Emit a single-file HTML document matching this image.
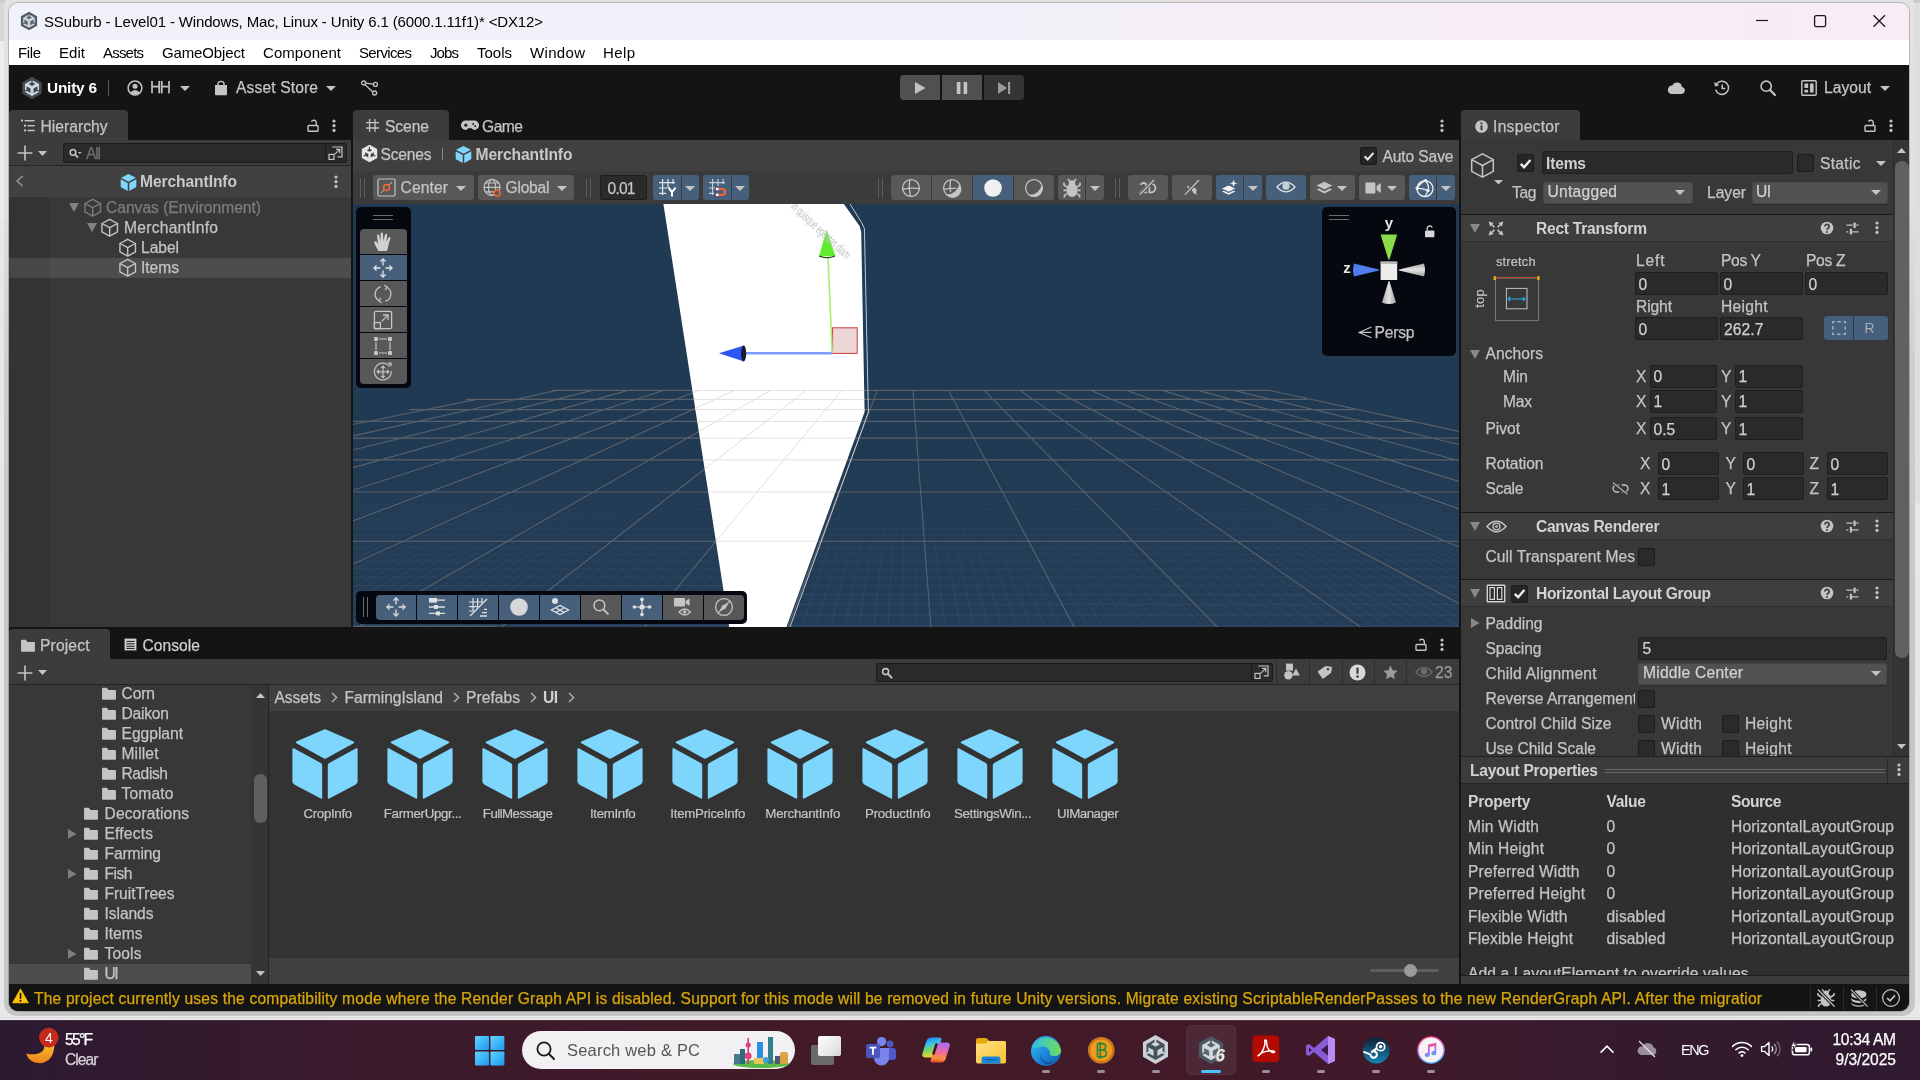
<!DOCTYPE html>
<html lang="en"><head><meta charset="utf-8"><title>Unity Editor</title>
<style>
html,body{margin:0;padding:0;}
body{width:1920px;height:1080px;overflow:hidden;position:relative;background:#ececec;font-family:"Liberation Sans",sans-serif;}
.a{position:absolute;display:block;}
.t{white-space:nowrap;}
#root{position:absolute;left:0;top:0;width:1920px;height:1080px;overflow:hidden;will-change:transform;}
svg{overflow:visible;}
</style></head>
<body>
<div id="root">
<div class="a" style="left:0px;top:0px;width:1920px;height:1020px;background:#e7e7e7;"></div>
<div class="a" style="left:0px;top:0px;width:1920px;height:3px;background:#cbcbcb;"></div>
<div class="a" style="left:0px;top:3px;width:5px;height:38px;background:#d7d7d7;"></div>
<div class="a" style="left:0px;top:41px;width:5px;height:180px;background:#ececec;"></div>
<div class="a" style="left:1915px;top:3px;width:5px;height:500px;background:#dedede;"></div>
<div class="a" style="left:4px;top:-6px;width:1911px;height:1022px;background:linear-gradient(180deg,#e3e3e3 0%,#e1e1e1 20%,#cdcdcd 38%,#c7c7c7 60%,#c6c6c6 100%);border-radius:13px;"></div>
<div class="a" style="left:0px;top:1017px;width:1920px;height:3px;background:linear-gradient(180deg,#dcdcdc,#efefef);"></div>
<div class="a" style="left:9px;top:3px;width:1900px;height:1008px;background:transparent;border-radius:9px;box-shadow:0 0 0 1px rgba(0,0,0,0.2);"></div>
<div class="a" style="left:9px;top:60px;width:1900px;height:951px;background:#141414;border-radius:0 0 9px 9px;"></div>
<div class="a" style="left:9px;top:3px;width:1900px;height:37px;background:linear-gradient(90deg,#f1f2f9 0%,#f1f1f9 45%,#f6eef7 70%,#f8ecf6 100%);border-radius:9px 9px 0 0;"></div>
<svg class="a" style="left:19px;top:11px;" width="20" height="20" viewBox="0 0 24 24"><path d="M12 0.8L21.7 6.4V17.6L12 23.2L2.3 17.6V6.4Z" fill="#4f5c67"/><path d="M12 3.9L19 7.95V16.05L12 20.1L5 16.05V7.95Z" fill="#cdd3d9"/><g fill="#5a6670"><path d="M12 5.9L15.4 7.9L12 9.9L8.6 7.9Z"/><path d="M11.3 3.6H12.7V6.6H11.3Z"/><path d="M6.5 10.3L10.5 12.6V17L6.5 14.7Z"/><path d="M17.5 10.3L13.5 12.6V17L17.5 14.7Z"/><path d="M4.2 14.9L6.9 13.4L7.6 14.6L4.9 16.1ZM19.8 14.9L17.1 13.4L16.4 14.6L19.1 16.1Z"/></g></svg>
<span class="a t" id="t1" style="top:11px;font-size:15px;line-height:21px;color:#000;letter-spacing:-0.141px;left:44px;">SSuburb - Level01 - Windows, Mac, Linux - Unity 6.1 (6000.1.11f1)* &lt;DX12&gt;</span>
<svg class="a" style="left:1750px;top:12px;" width="150" height="20" viewBox="0 0 150 20"><path d="M6 8.5H18" stroke="#1a1a1a" stroke-width="1.2"/><rect x="64.6" y="3.6" width="11" height="11" rx="1.6" fill="none" stroke="#1a1a1a" stroke-width="1.3"/><path d="M123.5 3.2L135 14.8M135 3.2L123.5 14.8" stroke="#1a1a1a" stroke-width="1.3"/></svg>
<div class="a" style="left:9px;top:40px;width:1900px;height:25px;background:#ffffff;"></div>
<span class="a t" id="t2" style="top:42px;font-size:15px;line-height:21px;color:#000;letter-spacing:-0.391px;left:18px;">File</span>
<span class="a t" id="t3" style="top:42px;font-size:15px;line-height:21px;color:#000;letter-spacing:0.047px;left:59px;">Edit</span>
<span class="a t" id="t4" style="top:42px;font-size:15px;line-height:21px;color:#000;letter-spacing:-0.803px;left:103px;">Assets</span>
<span class="a t" id="t5" style="top:42px;font-size:15px;line-height:21px;color:#000;letter-spacing:-0.134px;left:162px;">GameObject</span>
<span class="a t" id="t6" style="top:42px;font-size:15px;line-height:21px;color:#000;letter-spacing:0.055px;left:263px;">Component</span>
<span class="a t" id="t7" style="top:42px;font-size:15px;line-height:21px;color:#000;letter-spacing:-0.647px;left:359px;">Services</span>
<span class="a t" id="t8" style="top:42px;font-size:15px;line-height:21px;color:#000;letter-spacing:-0.896px;left:430px;">Jobs</span>
<span class="a t" id="t9" style="top:42px;font-size:15px;line-height:21px;color:#000;letter-spacing:-0.008px;left:477px;">Tools</span>
<span class="a t" id="t10" style="top:42px;font-size:15px;line-height:21px;color:#000;letter-spacing:0.328px;left:530px;">Window</span>
<span class="a t" id="t11" style="top:42px;font-size:15px;line-height:21px;color:#000;letter-spacing:0.380px;left:603px;">Help</span>
<div class="a" style="left:9px;top:65px;width:1900px;height:45px;background:#141414;"></div>
<svg class="a" style="left:19.5px;top:75.5px;" width="24" height="24" viewBox="0 0 24 24"><path d="M12 0.8L21.7 6.4V17.6L12 23.2L2.3 17.6V6.4Z" fill="#424d57"/><path d="M12 3.9L19 7.95V16.05L12 20.1L5 16.05V7.95Z" fill="#d2d7dc"/><g fill="#3f4a54"><path d="M12 5.9L15.4 7.9L12 9.9L8.6 7.9Z"/><path d="M11.3 3.6H12.7V6.6H11.3Z"/><path d="M6.5 10.3L10.5 12.6V17L6.5 14.7Z"/><path d="M17.5 10.3L13.5 12.6V17L17.5 14.7Z"/><path d="M4.2 14.9L6.9 13.4L7.6 14.6L4.9 16.1ZM19.8 14.9L17.1 13.4L16.4 14.6L19.1 16.1Z"/></g></svg>
<span class="a t" id="t12" style="top:77px;font-size:15.4px;line-height:21px;color:#ffffff;font-weight:700;letter-spacing:-0.219px;left:47px;">Unity 6</span>
<div class="a" style="left:108px;top:80px;width:1px;height:16px;background:#5a5a5a;"></div>
<svg class="a" style="left:127px;top:80px;" width="16" height="16" viewBox="0 0 16 16"><circle cx="8" cy="8" r="6.9" fill="none" stroke="#c4c4c4" stroke-width="1.5"/><circle cx="8" cy="6.3" r="2.5" fill="#c4c4c4"/><path d="M3.2 12.6Q8 7.6 12.8 12.6Q8 16 3.2 12.6Z" fill="#c4c4c4"/></svg>
<span class="a t" id="t13" style="top:77px;font-size:15.6px;line-height:21px;color:#c4c4c4;letter-spacing:-1.531px;-webkit-text-stroke:0.25px #c4c4c4;left:150px;">HH</span>
<svg class="a" style="left:180px;top:86px;" width="10" height="5" viewBox="0 0 10 5"><path d="M0 0H10L5.0 5Z" fill="#c4c4c4"/></svg>
<svg class="a" style="left:214px;top:80px;" width="14" height="16" viewBox="0 0 14 16"><path d="M1 5H13V14.2Q13 15.2 12 15.2H2Q1 15.2 1 14.2Z" fill="#c4c4c4"/><path d="M4 6V3.8Q4 1.4 7 1.4Q10 1.4 10 3.8V6" fill="none" stroke="#c4c4c4" stroke-width="1.4"/></svg>
<span class="a t" id="t14" style="top:77px;font-size:15.6px;line-height:21px;color:#c4c4c4;letter-spacing:0.139px;-webkit-text-stroke:0.25px #c4c4c4;left:236px;">Asset Store</span>
<svg class="a" style="left:326px;top:86px;" width="10" height="5" viewBox="0 0 10 5"><path d="M0 0H10L5.0 5Z" fill="#c4c4c4"/></svg>
<svg class="a" style="left:360px;top:79px;" width="19" height="18" viewBox="0 0 19 18"><g fill="none" stroke="#c4c4c4" stroke-width="1.3"><circle cx="3.6" cy="4" r="2"/><circle cx="15.4" cy="5.4" r="2"/><circle cx="14.6" cy="14" r="2"/><path d="M5.6 4.2L13.4 5.2M5 5.6L12.8 13"/></g></svg>
<div class="a" style="left:900px;top:75px;width:40px;height:25px;background:#505050;border-radius:4px 0 0 4px;"></div>
<div class="a" style="left:942px;top:75px;width:40px;height:25px;background:#505050;"></div>
<div class="a" style="left:984px;top:75px;width:40px;height:25px;background:#353535;border-radius:0 4px 4px 0;"></div>
<svg class="a" style="left:900px;top:75px;" width="124" height="25" viewBox="0 0 124 25"><path d="M15 7L25.5 13L15 19Z" fill="#c4c4c4"/><path d="M56.8 7H60.4V19H56.8ZM63.6 7H67.2V19H63.6Z" fill="#c4c4c4"/><path d="M98 7L107 13L98 19Z" fill="#9a9a9a"/><path d="M108 7H110.2V19H108Z" fill="#9a9a9a"/></svg>
<svg class="a" style="left:1666px;top:80px;" width="20" height="15" viewBox="0 0 20 15"><path d="M5 14H15.6A3.6 3.6 0 0 0 16 6.9A5.2 5.2 0 0 0 6.2 5.4A4.4 4.4 0 0 0 5 14Z" fill="#c4c4c4"/></svg>
<svg class="a" style="left:1713px;top:79px;" width="18" height="18" viewBox="0 0 18 18"><g fill="none" stroke="#c4c4c4" stroke-width="1.5"><path d="M3.4 5.2A6.6 6.6 0 1 1 2.6 10.6"/><path d="M9.2 5.4V9.6H12.4"/></g><path d="M1 3L2 7.6L6.4 6.2Z" fill="#c4c4c4"/></svg>
<svg class="a" style="left:1759px;top:79px;" width="18" height="18" viewBox="0 0 18 18"><circle cx="7.2" cy="7.2" r="5.1" fill="none" stroke="#c4c4c4" stroke-width="1.6"/><path d="M11 11L16 16" stroke="#c4c4c4" stroke-width="2.2" stroke-linecap="round"/></svg>
<svg class="a" style="left:1801px;top:80px;" width="16" height="16" viewBox="0 0 16 16"><rect x="0.8" y="0.8" width="14.4" height="14.4" rx="1" fill="none" stroke="#c4c4c4" stroke-width="1.4"/><path d="M3.4 3.4H7.2V8H3.4ZM9 3.4H12.6V12.6H9ZM3.4 9.8H7.2V12.6H3.4Z" fill="#c4c4c4"/></svg>
<span class="a t" id="t15" style="top:77px;font-size:15.6px;line-height:21px;color:#c4c4c4;letter-spacing:0.034px;-webkit-text-stroke:0.25px #c4c4c4;left:1824px;">Layout</span>
<svg class="a" style="left:1880px;top:86px;" width="10" height="5" viewBox="0 0 10 5"><path d="M0 0H10L5.0 5Z" fill="#c4c4c4"/></svg>
<div class="a" style="left:9px;top:110px;width:119px;height:30px;background:#3c3c3c;border-radius:4px 4px 0 0;"></div>
<svg class="a" style="left:21px;top:119px;" width="14" height="13" viewBox="0 0 14 13"><g fill="#c4c4c4"><rect x="0" y="0.6" width="2" height="2"/><rect x="3.6" y="1" width="10" height="1.4"/><rect x="3" y="5.6" width="2" height="2"/><rect x="6.4" y="6" width="7.4" height="1.4"/><rect x="3" y="10.4" width="2" height="2"/><rect x="6.4" y="10.8" width="7.4" height="1.4"/></g></svg>
<span class="a t" id="t16" style="top:116px;font-size:15.6px;line-height:21px;color:#c4c4c4;letter-spacing:0.033px;-webkit-text-stroke:0.25px #c4c4c4;left:40.5px;">Hierarchy</span>
<svg class="a" style="left:307px;top:118.5px;" width="12" height="13" viewBox="0 0 12 13"><rect x="1" y="6.5" width="10" height="5.8" rx="0.8" fill="none" stroke="#c4c4c4" stroke-width="1.4"/><path d="M9.3 6.5V3.6A2.6 2.6 0 0 0 4.4 2.6" fill="none" stroke="#c4c4c4" stroke-width="1.4"/></svg>
<svg class="a" style="left:331px;top:117.8px;" width="6" height="15.4" viewBox="0 0 6 15.4"><circle cx="3" cy="3.0" r="1.6" fill="#c4c4c4"/><circle cx="3" cy="7.7" r="1.6" fill="#c4c4c4"/><circle cx="3" cy="12.4" r="1.6" fill="#c4c4c4"/></svg>
<div class="a" style="left:9px;top:140px;width:342px;height:26px;background:#3c3c3c;"></div>
<div class="a" style="left:9px;top:165px;width:342px;height:1px;background:#242424;"></div>
<svg class="a" style="left:17px;top:145px;" width="16" height="16" viewBox="0 0 16 16"><path d="M8 0.6V15.4M0.6 8H15.4" stroke="#c4c4c4" stroke-width="1.6"/></svg>
<svg class="a" style="left:38px;top:150.5px;" width="9" height="5" viewBox="0 0 9 5"><path d="M0 0H9L4.5 5Z" fill="#c4c4c4"/></svg>
<div class="a" style="left:63px;top:143px;width:284px;height:20px;background:#2a2a2a;border-radius:3px;box-shadow:inset 0 0 0 1px #1c1c1c;"></div>
<svg class="a" style="left:69px;top:148px;" width="13" height="11" viewBox="0 0 13 11"><circle cx="4" cy="4.4" r="2.8" fill="none" stroke="#c4c4c4" stroke-width="1.5"/><path d="M6 6.4L9 9.6" stroke="#c4c4c4" stroke-width="1.6"/><path d="M9 4H12.6L10.8 6Z" fill="#c4c4c4"/></svg>
<span class="a t" id="t17" style="top:143px;font-size:15.6px;line-height:21px;color:#6e6e6e;letter-spacing:-1.172px;-webkit-text-stroke:0.25px #6e6e6e;left:86px;">All</span>
<div class="a" style="left:325px;top:144px;width:1px;height:18px;background:#1c1c1c;"></div>
<svg class="a" style="left:328px;top:146px;" width="16" height="15" viewBox="0 0 16 15"><g fill="none" stroke="#c4c4c4" stroke-width="1.2"><path d="M4.4 1H14V10.8H9.6"/><rect x="1" y="8.4" width="5" height="5" /><path d="M6.6 8.4L11.6 3.6M8 3.4H11.8V7.2"/></g></svg>
<div class="a" style="left:9px;top:166px;width:342px;height:31px;background:#414141;"></div>
<svg class="a" style="left:15px;top:175px;" width="9" height="12" viewBox="0 0 9 12"><path d="M7.6 1L2 6L7.6 11" fill="none" stroke="#9a9a9a" stroke-width="1.4"/></svg>
<svg class="a" style="left:119px;top:172.5px;" width="19" height="19" viewBox="0 0 18 18"><path d="M9 1L16 4.6L9 8.2L2 4.6Z" fill="#7fd6fd"/><path d="M1.6 5.9L8.3 9.4V17L2.3 13.8Q1.6 13.4 1.6 12.6Z" fill="#7fd6fd"/><path d="M16.4 5.9L9.7 9.4V17L15.7 13.8Q16.4 13.4 16.4 12.6Z" fill="#7fd6fd"/></svg>
<span class="a t" id="t18" style="top:171px;font-size:15.6px;line-height:21px;color:#c8c8c8;font-weight:700;letter-spacing:-0.082px;left:140px;">MerchantInfo</span>
<svg class="a" style="left:333px;top:174.3px;" width="6" height="15.4" viewBox="0 0 6 15.4"><circle cx="3" cy="3.0" r="1.6" fill="#c4c4c4"/><circle cx="3" cy="7.7" r="1.6" fill="#c4c4c4"/><circle cx="3" cy="12.4" r="1.6" fill="#c4c4c4"/></svg>
<div class="a" style="left:9px;top:197px;width:342px;height:430px;background:#383838;"></div>
<div class="a" style="left:9px;top:197px;width:40px;height:430px;background:#333333;"></div>
<div class="a" style="left:9px;top:258px;width:342px;height:20px;background:#4d4d4d;"></div>
<div class="a" style="left:9px;top:258px;width:40px;height:20px;background:#474747;"></div>
<svg class="a" style="left:69px;top:202.5px;" width="10" height="9" viewBox="0 0 10 9"><path d="M0 0H10L5.0 9Z" fill="#828282"/></svg>
<svg class="a" style="left:83.4px;top:197.9px;" width="19.4" height="19.4" viewBox="0 0 18 18"><g fill="none" stroke="#7d7d7d" stroke-width="1.3" stroke-linejoin="round"><path d="M9 1.2L16.2 5.1V12.9L9 16.8L1.8 12.9V5.1Z"/><path d="M1.8 5.1L9 9L16.2 5.1M9 9V16.8"/></g></svg>
<span class="a t" id="t19" style="top:197px;font-size:15.6px;line-height:21px;color:#7d7d7d;letter-spacing:-0.007px;-webkit-text-stroke:0.25px #7d7d7d;left:106px;">Canvas (Environment)</span>
<svg class="a" style="left:87px;top:222.5px;" width="10" height="9" viewBox="0 0 10 9"><path d="M0 0H10L5.0 9Z" fill="#828282"/></svg>
<svg class="a" style="left:100.4px;top:217.9px;" width="19.4" height="19.4" viewBox="0 0 18 18"><g fill="none" stroke="#c4c4c4" stroke-width="1.3" stroke-linejoin="round"><path d="M9 1.2L16.2 5.1V12.9L9 16.8L1.8 12.9V5.1Z"/><path d="M1.8 5.1L9 9L16.2 5.1M9 9V16.8"/></g></svg>
<span class="a t" id="t20" style="top:217px;font-size:15.6px;line-height:21px;color:#c4c4c4;letter-spacing:0.271px;-webkit-text-stroke:0.25px #c4c4c4;left:124px;">MerchantInfo</span>
<svg class="a" style="left:118.4px;top:237.9px;" width="19.4" height="19.4" viewBox="0 0 18 18"><g fill="none" stroke="#c4c4c4" stroke-width="1.3" stroke-linejoin="round"><path d="M9 1.2L16.2 5.1V12.9L9 16.8L1.8 12.9V5.1Z"/><path d="M1.8 5.1L9 9L16.2 5.1M9 9V16.8"/></g></svg>
<span class="a t" id="t21" style="top:237px;font-size:15.6px;line-height:21px;color:#c4c4c4;letter-spacing:-0.039px;-webkit-text-stroke:0.25px #c4c4c4;left:141px;">Label</span>
<svg class="a" style="left:118.4px;top:257.9px;" width="19.4" height="19.4" viewBox="0 0 18 18"><g fill="none" stroke="#c4c4c4" stroke-width="1.3" stroke-linejoin="round"><path d="M9 1.2L16.2 5.1V12.9L9 16.8L1.8 12.9V5.1Z"/><path d="M1.8 5.1L9 9L16.2 5.1M9 9V16.8"/></g></svg>
<span class="a t" id="t22" style="top:257px;font-size:15.6px;line-height:21px;color:#c4c4c4;letter-spacing:-0.031px;-webkit-text-stroke:0.25px #c4c4c4;left:141px;">Items</span>
<div class="a" style="left:353px;top:110px;width:96px;height:30px;background:#3c3c3c;border-radius:4px 4px 0 0;"></div>
<svg class="a" style="left:366px;top:119px;" width="13" height="13" viewBox="0 0 13 13"><path d="M3.6 0V13M9 0V13M0 3.6H13M0 9H13" stroke="#c4c4c4" stroke-width="1.3"/></svg>
<span class="a t" id="t23" style="top:116px;font-size:15.6px;line-height:21px;color:#c4c4c4;letter-spacing:-0.055px;-webkit-text-stroke:0.25px #c4c4c4;left:385px;">Scene</span>
<svg class="a" style="left:461px;top:120px;" width="18" height="11" viewBox="0 0 18 11"><path d="M4.6 0.6H13.4A4.6 4.6 0 0 1 13.4 10Q12 10 10.6 8.2H7.4Q6 10 4.6 10A4.6 4.6 0 0 1 4.6 0.6Z" fill="#c4c4c4"/><path d="M3 5.2H6.6M4.8 3.4V7" stroke="#141414" stroke-width="1.2"/><circle cx="12.2" cy="4" r="0.9" fill="#141414"/><circle cx="14.2" cy="6.2" r="0.9" fill="#141414"/></svg>
<span class="a t" id="t24" style="top:116px;font-size:15.6px;line-height:21px;color:#c4c4c4;letter-spacing:-0.490px;-webkit-text-stroke:0.25px #c4c4c4;left:482px;">Game</span>
<svg class="a" style="left:1439px;top:117.8px;" width="6" height="15.4" viewBox="0 0 6 15.4"><circle cx="3" cy="3.0" r="1.6" fill="#c4c4c4"/><circle cx="3" cy="7.7" r="1.6" fill="#c4c4c4"/><circle cx="3" cy="12.4" r="1.6" fill="#c4c4c4"/></svg>
<div class="a" style="left:353px;top:140px;width:1106px;height:31px;background:#404040;"></div>
<svg class="a" style="left:360px;top:144px;" width="19" height="19" viewBox="0 0 24 24"><path d="M12 0.8L21.7 6.4V17.6L12 23.2L2.3 17.6V6.4Z" fill="#e6e6e6"/><path d="M12 3.9L19 7.95V16.05L12 20.1L5 16.05V7.95Z" fill="#e6e6e6"/><g fill="#404040"><path d="M12 5.9L15.4 7.9L12 9.9L8.6 7.9Z"/><path d="M11.3 3.6H12.7V6.6H11.3Z"/><path d="M6.5 10.3L10.5 12.6V17L6.5 14.7Z"/><path d="M17.5 10.3L13.5 12.6V17L17.5 14.7Z"/><path d="M4.2 14.9L6.9 13.4L7.6 14.6L4.9 16.1ZM19.8 14.9L17.1 13.4L16.4 14.6L19.1 16.1Z"/></g></svg>
<span class="a t" id="t25" style="top:144px;font-size:15.6px;line-height:21px;color:#c4c4c4;letter-spacing:-0.203px;-webkit-text-stroke:0.25px #c4c4c4;left:380.5px;">Scenes</span>
<div class="a" style="left:442px;top:148px;width:1px;height:12px;background:#8a8a8a;"></div>
<svg class="a" style="left:454px;top:144.5px;" width="19" height="19" viewBox="0 0 18 18"><path d="M9 1L16 4.6L9 8.2L2 4.6Z" fill="#7fd6fd"/><path d="M1.6 5.9L8.3 9.4V17L2.3 13.8Q1.6 13.4 1.6 12.6Z" fill="#7fd6fd"/><path d="M16.4 5.9L9.7 9.4V17L15.7 13.8Q16.4 13.4 16.4 12.6Z" fill="#7fd6fd"/></svg>
<span class="a t" id="t26" style="top:144px;font-size:15.6px;line-height:21px;color:#c8c8c8;font-weight:700;letter-spacing:-0.082px;left:475.5px;">MerchantInfo</span>
<div class="a" style="left:1360px;top:147px;width:17px;height:18px;background:#262626;border-radius:3px;box-shadow:inset 0 0 0 1px #1a1a1a;"></div>
<svg class="a" style="left:1362.5px;top:150px;" width="12" height="12" viewBox="0 0 11 11"><path d="M1.5 5.8L4.3 8.6L9.6 2.6" fill="none" stroke="#e8e8e8" stroke-width="1.9"/></svg>
<span class="a t" id="t27" style="top:146px;font-size:15.6px;line-height:21px;color:#c4c4c4;letter-spacing:-0.121px;-webkit-text-stroke:0.25px #c4c4c4;left:1382.5px;">Auto Save</span>
<div class="a" style="left:353px;top:171px;width:1106px;height:33px;background:#3b3b3b;"></div>
<div class="a" style="left:360px;top:178px;width:1px;height:20px;background:#5c5c5c;"></div>
<div class="a" style="left:364px;top:178px;width:1px;height:20px;background:#5c5c5c;"></div>
<div class="a" style="left:586px;top:178px;width:1px;height:20px;background:#5c5c5c;"></div>
<div class="a" style="left:590px;top:178px;width:1px;height:20px;background:#5c5c5c;"></div>
<div class="a" style="left:878px;top:178px;width:1px;height:20px;background:#5c5c5c;"></div>
<div class="a" style="left:882px;top:178px;width:1px;height:20px;background:#5c5c5c;"></div>
<div class="a" style="left:1115px;top:178px;width:1px;height:20px;background:#5c5c5c;"></div>
<div class="a" style="left:1119px;top:178px;width:1px;height:20px;background:#5c5c5c;"></div>
<div class="a" style="left:373px;top:175px;width:101px;height:25px;background:#585858;border-radius:3px;"></div>
<svg class="a" style="left:377px;top:178px;" width="19" height="19" viewBox="0 0 19 19"><rect x="1" y="1" width="17" height="17" rx="1.4" fill="none" stroke="#c4c4c4" stroke-width="1.2"/><path d="M4 15L15 4" stroke="#c4c4c4" stroke-width="1"/><circle cx="9.6" cy="9.6" r="3" fill="#585858" stroke="#f0643c" stroke-width="1.6"/></svg>
<span class="a t" id="t28" style="top:177px;font-size:15.6px;line-height:21px;color:#c4c4c4;letter-spacing:0.138px;-webkit-text-stroke:0.25px #c4c4c4;left:400.5px;">Center</span>
<svg class="a" style="left:456px;top:185.5px;" width="10" height="5" viewBox="0 0 10 5"><path d="M0 0H10L5.0 5Z" fill="#c4c4c4"/></svg>
<div class="a" style="left:478px;top:175px;width:96px;height:25px;background:#585858;border-radius:3px;"></div>
<svg class="a" style="left:483px;top:178px;" width="20" height="20" viewBox="0 0 20 20"><g fill="none" stroke="#c4c4c4" stroke-width="1.2"><circle cx="9" cy="9.4" r="8"/><ellipse cx="9" cy="9.4" rx="3.6" ry="8"/><path d="M1 9.4H17M2.4 5H15.6M2.4 13.8H15.6"/></g><circle cx="14" cy="15" r="3" fill="#585858" stroke="#f0643c" stroke-width="1.6"/></svg>
<span class="a t" id="t29" style="top:177px;font-size:15.6px;line-height:21px;color:#c4c4c4;letter-spacing:-0.216px;-webkit-text-stroke:0.25px #c4c4c4;left:505.5px;">Global</span>
<svg class="a" style="left:557px;top:185.5px;" width="10" height="5" viewBox="0 0 10 5"><path d="M0 0H10L5.0 5Z" fill="#c4c4c4"/></svg>
<div class="a" style="left:600px;top:175px;width:47px;height:25px;background:#2a2a2a;border-radius:3px;box-shadow:inset 0 0 0 1px #1d1d1d;"></div>
<span class="a t" id="t30" style="top:178px;font-size:15.6px;line-height:21px;color:#c4c4c4;letter-spacing:-0.786px;-webkit-text-stroke:0.25px #c4c4c4;left:607.5px;">0.01</span>
<div class="a" style="left:653px;top:175px;width:27.5px;height:25px;background:#46607c;border-radius:3px 0 0 3px;"></div>
<div class="a" style="left:681.5px;top:175px;width:17.5px;height:25px;background:#46607c;border-radius:0 3px 3px 0;"></div>
<svg class="a" style="left:658px;top:178px;" width="20" height="20" viewBox="0 0 20 20"><path d="M4.6 1V17M10 1V10M15 1V6M1 4.6H17M1 10H9M1 15.4H8" stroke="#e6e6e6" stroke-width="1.2" fill="none"/><path d="M10.6 9.6L14 14.2V18.4M17.6 9.6L14 14.2" stroke="#ffffff" stroke-width="2" fill="none"/></svg>
<svg class="a" style="left:685px;top:185.5px;" width="10" height="5" viewBox="0 0 10 5"><path d="M0 0H10L5.0 5Z" fill="#c4c4c4"/></svg>
<div class="a" style="left:703px;top:175px;width:27.5px;height:25px;background:#46607c;border-radius:3px 0 0 3px;"></div>
<div class="a" style="left:731.5px;top:175px;width:17.5px;height:25px;background:#46607c;border-radius:0 3px 3px 0;"></div>
<svg class="a" style="left:708px;top:178px;" width="20" height="20" viewBox="0 0 20 20"><path d="M4.6 1V17M10 1V8M15 1V6M1 4.6H17M1 10H7M1 15.4H6" stroke="#c9d2dc" stroke-width="1.1" fill="none"/><path d="M10 11H14.2A2.9 2.9 0 0 1 14.2 16.8H10" fill="none" stroke="#f0643c" stroke-width="2.2"/><rect x="8" y="9.8" width="2.4" height="2.4" fill="#fff"/><rect x="8" y="15.6" width="2.4" height="2.4" fill="#fff"/></svg>
<svg class="a" style="left:735px;top:185.5px;" width="10" height="5" viewBox="0 0 10 5"><path d="M0 0H10L5.0 5Z" fill="#c4c4c4"/></svg>
<div class="a" style="left:891px;top:175px;width:40px;height:25px;background:#585858;border-radius:3px 0 0 3px;"></div>
<div class="a" style="left:932px;top:175px;width:40px;height:25px;background:#585858;"></div>
<div class="a" style="left:973px;top:175px;width:40px;height:25px;background:#46607c;"></div>
<div class="a" style="left:1014px;top:175px;width:40px;height:25px;background:#585858;border-radius:0 3px 3px 0;"></div>
<svg class="a" style="left:901px;top:178px;" width="20" height="20" viewBox="0 0 20 20"><g fill="none" stroke="#c4c4c4" stroke-width="1.3"><circle cx="10" cy="10" r="8.4"/><path d="M8.6 1.8Q7.4 10 9.4 18.2M1.8 11.4Q10 9.4 18.2 10.6"/></g></svg>
<svg class="a" style="left:942px;top:178px;" width="20" height="20" viewBox="0 0 20 20"><path d="M17.6 6A8.4 8.4 0 0 1 4 16.6Q13.6 17 17.6 6Z" fill="#c4c4c4"/><g fill="none" stroke="#c4c4c4" stroke-width="1.3"><circle cx="10" cy="10" r="8.4"/><path d="M8.6 1.8Q7.4 8 8.6 14M1.8 11.4Q8 10 14.6 10.4"/></g></svg>
<svg class="a" style="left:983px;top:178px;" width="20" height="20" viewBox="0 0 20 20"><circle cx="10" cy="10" r="8.8" fill="#f0f0f0"/></svg>
<svg class="a" style="left:1024px;top:178px;" width="20" height="20" viewBox="0 0 20 20"><circle cx="10" cy="10" r="8.4" fill="none" stroke="#c4c4c4" stroke-width="1.3"/><path d="M17.8 7A8.4 8.4 0 0 1 4.6 16.8Q14.6 17.4 17.8 7Z" fill="#c4c4c4"/></svg>
<div class="a" style="left:1058px;top:175px;width:27px;height:25px;background:#585858;border-radius:3px 0 0 3px;"></div>
<div class="a" style="left:1086px;top:175px;width:18px;height:25px;background:#585858;border-radius:0 3px 3px 0;"></div>
<svg class="a" style="left:1062px;top:177.5px;" width="20" height="20" viewBox="0 0 20 20"><g fill="#c4c4c4"><ellipse cx="10" cy="12" rx="5.6" ry="7"/><circle cx="10" cy="5.4" r="3.2"/></g><g stroke="#c4c4c4" stroke-width="1.6" fill="none"><path d="M5 9L2 7V4.6M4.6 12.4H1.4M5.2 15.6L2.4 17.4V19.6M15 9L18 7V4.6M15.4 12.4H18.6M14.8 15.6L17.6 17.4V19.6M7.8 3.4L6 1M12.2 3.4L14 1"/></g></svg>
<svg class="a" style="left:1090px;top:185.5px;" width="10" height="5" viewBox="0 0 10 5"><path d="M0 0H10L5.0 5Z" fill="#c4c4c4"/></svg>
<div class="a" style="left:1128px;top:175px;width:40px;height:25px;background:#585858;border-radius:3px;"></div>
<svg class="a" style="left:1139px;top:179px;" width="18" height="17" viewBox="0 0 18 17"><path d="M1.6 6A3 3 0 0 1 7.4 6.6Q7.2 8.4 1.6 13.4H8.2" fill="none" stroke="#c4c4c4" stroke-width="1.8"/><path d="M10.4 4.6V13.4H12A4.4 4.4 0 0 0 12 4.6Z" fill="none" stroke="#c4c4c4" stroke-width="1.8"/><path d="M1 15.6L15 1" stroke="#585858" stroke-width="3.4"/><path d="M1 15.6L15 1" stroke="#c4c4c4" stroke-width="1.3"/></svg>
<div class="a" style="left:1172px;top:175px;width:40px;height:25px;background:#585858;border-radius:3px;"></div>
<svg class="a" style="left:1184px;top:179px;" width="18" height="17" viewBox="0 0 18 17"><path d="M6.4 7.4H8.6L12.4 10V16L9 13.4Z" fill="#c4c4c4"/><path d="M3.4 7L6 10.6L8.6 7" fill="none" stroke="#c4c4c4" stroke-width="1.3"/><path d="M1 15.6L15 1" stroke="#585858" stroke-width="3.2"/><path d="M1 15.6L15 1" stroke="#c4c4c4" stroke-width="1.3"/></svg>
<div class="a" style="left:1216px;top:175px;width:27px;height:25px;background:#46607c;border-radius:3px 0 0 3px;"></div>
<div class="a" style="left:1244px;top:175px;width:18px;height:25px;background:#46607c;border-radius:0 3px 3px 0;"></div>
<svg class="a" style="left:1221px;top:178px;" width="19" height="19" viewBox="0 0 19 19"><g fill="#f2f2f2"><path d="M1 10.6L7.6 7.4L14.4 10.6L7.6 13.8Z"/><path d="M1 13.6L2.8 12.8L7.6 15L12.4 12.8L14.4 13.6L7.6 16.8Z"/><path d="M12.6 0.6L13.8 4.2L17.4 5.4L13.8 6.6L12.6 10.2L11.4 6.6L7.8 5.4L11.4 4.2Z" stroke="#46607c" stroke-width="0.8"/></g></svg>
<svg class="a" style="left:1248px;top:185.5px;" width="10" height="5" viewBox="0 0 10 5"><path d="M0 0H10L5.0 5Z" fill="#c4c4c4"/></svg>
<div class="a" style="left:1266px;top:175px;width:40px;height:25px;background:#46607c;border-radius:3px;"></div>
<svg class="a" style="left:1276px;top:180px;" width="20" height="14" viewBox="0 0 20 14"><path d="M1 7Q10 -2.6 19 7Q10 16.6 1 7Z" fill="none" stroke="#e0e4e8" stroke-width="1.3"/><circle cx="10" cy="6.2" r="3.6" fill="#c9d0d8"/></svg>
<div class="a" style="left:1310px;top:175px;width:45px;height:25px;background:#585858;border-radius:3px;"></div>
<svg class="a" style="left:1316px;top:180.5px;" width="17" height="14" viewBox="0 0 17 14"><g fill="#c4c4c4"><path d="M0.6 4.6L8.4 0.8L16.2 4.6L8.4 8.4Z"/><path d="M0.6 8.6L3 7.4L8.4 10.2L13.8 7.4L16.2 8.6L8.4 12.6Z"/></g></svg>
<svg class="a" style="left:1337px;top:185.5px;" width="10" height="5" viewBox="0 0 10 5"><path d="M0 0H10L5.0 5Z" fill="#c4c4c4"/></svg>
<div class="a" style="left:1359px;top:175px;width:46px;height:25px;background:#585858;border-radius:3px;"></div>
<svg class="a" style="left:1365px;top:182px;" width="17" height="12" viewBox="0 0 17 12"><rect x="0.4" y="0.6" width="10" height="10.8" rx="0.8" fill="#c4c4c4"/><path d="M11.6 4L15.8 1V11L11.6 8Z" fill="#c4c4c4"/></svg>
<svg class="a" style="left:1387px;top:185.5px;" width="10" height="5" viewBox="0 0 10 5"><path d="M0 0H10L5.0 5Z" fill="#c4c4c4"/></svg>
<div class="a" style="left:1409px;top:175px;width:27px;height:25px;background:#46607c;border-radius:3px 0 0 3px;"></div>
<div class="a" style="left:1437px;top:175px;width:18px;height:25px;background:#46607c;border-radius:0 3px 3px 0;"></div>
<svg class="a" style="left:1415px;top:178px;" width="20" height="20" viewBox="0 0 20 20"><g fill="none" stroke="#f0f0f0" stroke-width="1.3"><circle cx="10" cy="10.6" r="8"/><path d="M10.6 2.4Q4 6 2 10.2M10.6 2.4Q14.6 8 13 12.6M2 10.2Q8 10.4 13 12.6M13 12.6Q12 16 9.6 18.4"/></g><g fill="#f0f0f0"><circle cx="10.6" cy="2.6" r="1.7"/><circle cx="2.2" cy="10.2" r="1.7"/><circle cx="13" cy="12.6" r="1.7"/></g></svg>
<svg class="a" style="left:1441px;top:185.5px;" width="10" height="5" viewBox="0 0 10 5"><path d="M0 0H10L5.0 5Z" fill="#c4c4c4"/></svg>
<svg class="a" style="left:353px;top:204px;overflow:hidden;" width="1106" height="423" viewBox="0 0 1106 423"><defs><linearGradient id="haze" x1="0" y1="0" x2="0" y2="1"><stop offset="0" stop-color="#8fb0d8" stop-opacity="0"/><stop offset="1" stop-color="#8fb0d8" stop-opacity="0.03"/></linearGradient><linearGradient id="subf" gradientUnits="userSpaceOnUse" x1="0" y1="455" x2="0" y2="627"><stop offset="0" stop-color="#9aa6b8" stop-opacity="0"/><stop offset="0.5" stop-color="#9aa6b8" stop-opacity="0.05"/><stop offset="1" stop-color="#9aa6b8" stop-opacity="0.1"/></linearGradient></defs><rect x="0" y="0" width="1106" height="423" fill="#213a54"/><g transform="translate(-353 -204)"><rect x="353" y="470" width="1106" height="157" fill="url(#haze)"/><path d="M353 455.7L1459 455.7M353 458.2L1459 458.2M353 460.7L1459 460.7M353 463.4L1459 463.4M353 466.1L1459 466.1M353 469.0L1459 469.0M353 472.0L1459 472.0M353 475.0L1459 475.0M353 478.2L1459 478.2M353 481.6L1459 481.6M353 485.0L1459 485.0M353 488.6L1459 488.6M353 492.4L1459 492.4M353 496.3L1459 496.3M353 500.4L1459 500.4M353 504.7L1459 504.7M353 509.2L1459 509.2M353 513.9L1459 513.9M353 518.8L1459 518.8M353 524.0L1459 524.0M353 529.4L1459 529.4M353 535.2L1459 535.2M353 541.2L1459 541.2M353 547.6L1459 547.6M353 554.3L1459 554.3M353 561.4L1459 561.4M353 569.0L1459 569.0M353 577.1L1459 577.1M353 585.6L1459 585.6M353 594.7L1459 594.7M353 604.5L1459 604.5M353 615.0L1459 615.0M353 626.2L1459 626.2M359 455.0L353 456.5M365 455.0L353 458.2M372 455.0L353 460.0M378 455.0L353 461.8M385 455.0L353 463.7M391 455.0L353 465.6M404 455.0L353 469.6M411 455.0L353 471.7M417 455.0L353 473.8M424 455.0L353 475.9M430 455.0L353 478.2M437 455.0L353 480.5M443 455.0L353 482.8M450 455.0L353 485.3M456 455.0L353 487.8M469 455.0L353 493.0M476 455.0L353 495.7M482 455.0L353 498.5M489 455.0L353 501.4M495 455.0L353 504.4M502 455.0L353 507.5M508 455.0L353 510.7M515 455.0L353 514.0M521 455.0L353 517.4M534 455.0L353 524.6M541 455.0L353 528.3M547 455.0L353 532.2M554 455.0L353 536.3M560 455.0L353 540.5M567 455.0L353 544.9M573 455.0L353 549.4M580 455.0L353 554.1M586 455.0L353 559.0M599 455.0L353 569.5M606 455.0L353 575.0M612 455.0L353 580.8M619 455.0L353 586.9M625 455.0L353 593.2M632 455.0L353 599.9M638 455.0L353 606.8M645 455.0L353 614.2M651 455.0L353 621.8M664 455.0L372 627.0M671 455.0L387 627.0M677 455.0L401 627.0M684 455.0L415 627.0M690 455.0L430 627.0M697 455.0L444 627.0M703 455.0L458 627.0M710 455.0L473 627.0M716 455.0L487 627.0M729 455.0L516 627.0M736 455.0L530 627.0M742 455.0L544 627.0M749 455.0L559 627.0M755 455.0L573 627.0M762 455.0L587 627.0M768 455.0L602 627.0M775 455.0L616 627.0M781 455.0L630 627.0M794 455.0L659 627.0M801 455.0L673 627.0M807 455.0L687 627.0M814 455.0L702 627.0M820 455.0L716 627.0M827 455.0L730 627.0M833 455.0L745 627.0M840 455.0L759 627.0M846 455.0L773 627.0M859 455.0L802 627.0M866 455.0L816 627.0M872 455.0L831 627.0M879 455.0L845 627.0M885 455.0L859 627.0M892 455.0L874 627.0M898 455.0L888 627.0M905 455.0L902 627.0M911 455.0L917 627.0M924 455.0L945 627.0M931 455.0L960 627.0M937 455.0L974 627.0M944 455.0L988 627.0M950 455.0L1002 627.0M957 455.0L1017 627.0M963 455.0L1031 627.0M970 455.0L1045 627.0M976 455.0L1060 627.0M989 455.0L1088 627.0M996 455.0L1103 627.0M1002 455.0L1117 627.0M1009 455.0L1131 627.0M1015 455.0L1146 627.0M1022 455.0L1160 627.0M1028 455.0L1174 627.0M1035 455.0L1189 627.0M1041 455.0L1203 627.0M1054 455.0L1232 627.0M1061 455.0L1246 627.0M1067 455.0L1260 627.0M1074 455.0L1275 627.0M1080 455.0L1289 627.0M1087 455.0L1303 627.0M1093 455.0L1318 627.0M1100 455.0L1332 627.0M1106 455.0L1346 627.0M1119 455.0L1375 627.0M1126 455.0L1389 627.0M1132 455.0L1403 627.0M1139 455.0L1418 627.0M1145 455.0L1432 627.0M1152 455.0L1446 627.0M1158 455.0L1459 626.0M1165 455.0L1459 618.1M1171 455.0L1459 610.6M1184 455.0L1459 596.6M1191 455.0L1459 590.1M1197 455.0L1459 583.8M1204 455.0L1459 577.9M1210 455.0L1459 572.2M1217 455.0L1459 566.7M1223 455.0L1459 561.5M1230 455.0L1459 556.5M1236 455.0L1459 551.7M1249 455.0L1459 542.6M1256 455.0L1459 538.3M1262 455.0L1459 534.1M1269 455.0L1459 530.1M1275 455.0L1459 526.3M1282 455.0L1459 522.6M1288 455.0L1459 519.0M1295 455.0L1459 515.5M1301 455.0L1459 512.1M1314 455.0L1459 505.8M1321 455.0L1459 502.7M1327 455.0L1459 499.8M1334 455.0L1459 496.9M1340 455.0L1459 494.1M1347 455.0L1459 491.4M1353 455.0L1459 488.8M1360 455.0L1459 486.3M1366 455.0L1459 483.8M1379 455.0L1459 479.1M1386 455.0L1459 476.8M1392 455.0L1459 474.6M1399 455.0L1459 472.5M1405 455.0L1459 470.4M1412 455.0L1459 468.3M1418 455.0L1459 466.4M1425 455.0L1459 464.4M1431 455.0L1459 462.5M1444 455.0L1459 458.9M1451 455.0L1459 457.1" fill="none" stroke="url(#subf)" stroke-width="1"/><path d="M476.6 399.4L353.0 424.5M556.5 390.4L353.0 435.9M592.2 390.4L353.0 450.0M627.8 390.4L353.0 467.6M663.5 390.4L353.0 490.3M699.1 390.4L353.0 520.9M734.7 390.4L353.0 564.1M770.4 390.4L358.1 627.0M806.0 390.4L501.3 627.0M841.7 390.4L644.5 627.0M877.3 390.4L787.7 627.0M912.9 390.4L930.9 627.0M948.6 390.4L1074.1 627.0M984.2 390.4L1217.3 627.0M1019.9 390.4L1360.5 627.0M1055.5 390.4L1459.0 603.4M1091.1 390.4L1459.0 547.0M1126.8 390.4L1459.0 508.9M1162.4 390.4L1459.0 481.4M1198.1 390.4L1459.0 460.7M1233.7 390.4L1459.0 444.5M1269.3 390.4L1459.0 431.4M552.0 390.4L1270.0 390.4M466.0 399.4L1307.0 399.4M409.0 409.6L1355.0 409.6M353.0 421.4L1415.0 421.4M353.0 438.1L1459.0 438.1M353.0 459.9L1459.0 459.9M353.0 492.0L1459.0 492.0M353.0 541.2L1459.0 541.2M353.0 626.2L497.0 626.2" fill="none" stroke="rgba(108,108,110,0.78)" stroke-width="1.1"/><path d="M850 204L861.6 222.6L864.4 228.4L868.4 412L790 627" fill="none" stroke="rgba(255,255,255,0.72)" stroke-width="1"/><path d="M663.4 204L843.8 204L859.6 226L861.2 232L864.6 412L786.4 627L729.2 627Z" fill="#ffffff"/><clipPath id="quad"><path d="M663.4 204L843.8 204L859.6 226L861.2 232L864.6 412L786.4 627L729.2 627Z"/></clipPath><path d="M476.6 399.4L353.0 424.5M556.5 390.4L353.0 435.9M592.2 390.4L353.0 450.0M627.8 390.4L353.0 467.6M663.5 390.4L353.0 490.3M699.1 390.4L353.0 520.9M734.7 390.4L353.0 564.1M770.4 390.4L358.1 627.0M806.0 390.4L501.3 627.0M841.7 390.4L644.5 627.0M877.3 390.4L787.7 627.0M912.9 390.4L930.9 627.0M948.6 390.4L1074.1 627.0M984.2 390.4L1217.3 627.0M1019.9 390.4L1360.5 627.0M1055.5 390.4L1459.0 603.4M1091.1 390.4L1459.0 547.0M1126.8 390.4L1459.0 508.9M1162.4 390.4L1459.0 481.4M1198.1 390.4L1459.0 460.7M1233.7 390.4L1459.0 444.5M1269.3 390.4L1459.0 431.4M552.0 390.4L1270.0 390.4M466.0 399.4L1307.0 399.4M409.0 409.6L1355.0 409.6M353.0 421.4L1415.0 421.4M353.0 438.1L1459.0 438.1M353.0 459.9L1459.0 459.9M353.0 492.0L1459.0 492.0M353.0 541.2L1459.0 541.2M353.0 626.2L497.0 626.2" fill="none" stroke="#e0e0e0" stroke-width="1" clip-path="url(#quad)"/><rect x="832.6" y="327.8" width="24.6" height="25.6" fill="#ecd6d6" stroke="#cf3b3b" stroke-width="1"/><path d="M745 353.3H832.4" stroke="#7c9cff" stroke-width="2.4"/><path d="M828 256.6L832.2 353" stroke="#a6f26e" stroke-width="1.6"/><path d="M826.6 229.4L835.4 256L819 256.4Z" fill="#5fee2e"/><path d="M819.4 255.6Q827 258.8 835 255.4L835.2 256.6Q827 259.6 819.2 256.8Z" fill="#173000"/><path d="M719 353.2L744 345.4Q746.6 353.4 744 361.4Z" fill="#2d55f2"/><ellipse cx="743.6" cy="353.4" rx="2.6" ry="8" fill="#171c33"/></g></svg>
<div class="a" style="left:353px;top:204px;width:1106px;height:423px;overflow:hidden;"><span class="a t" id="t31" style="top:-6px;font-size:7.5px;line-height:13px;color:#c2c2c2;letter-spacing:-0.200px;left:440px;transform-origin:0 50%;transform:rotate(43deg) scaleY(1.7);">in quisque egestas diam</span></div>
<div class="a" style="left:356px;top:207px;width:55px;height:181px;background:#05080f;border-radius:5px;"></div>
<div class="a" style="left:373px;top:215px;width:20px;height:1px;background:#6a6a6a;"></div>
<div class="a" style="left:373px;top:219px;width:20px;height:1px;background:#6a6a6a;"></div>
<div class="a" style="left:360px;top:229px;width:47px;height:25px;background:#585858;border-radius:4px 4px 0 0;"></div>
<div class="a" style="left:360px;top:255px;width:47px;height:25px;background:#46607c;"></div>
<div class="a" style="left:360px;top:281px;width:47px;height:25px;background:#585858;"></div>
<div class="a" style="left:360px;top:307px;width:47px;height:25px;background:#585858;"></div>
<div class="a" style="left:360px;top:333px;width:47px;height:25px;background:#585858;"></div>
<div class="a" style="left:360px;top:359px;width:47px;height:25px;background:#585858;border-radius:0 0 4px 4px;"></div>
<svg class="a" style="left:373.3px;top:232px;" width="20" height="20" viewBox="0 0 20 20"><path d="M5.4 19Q3.4 15.4 1.4 11.4Q0.6 9.6 2 9.2Q3.2 9 4.2 10.6L5.2 12.2L4 4Q3.8 2.6 4.8 2.4Q5.8 2.2 6.2 3.6L7.4 9L7.6 2Q7.6 0.6 8.8 0.6Q10 0.6 10 2L10.4 9L12 2.8Q12.4 1.6 13.4 1.8Q14.4 2 14.2 3.4L13.4 9.8L15.6 5.6Q16.2 4.6 17 5Q17.8 5.4 17.4 6.6Q15.6 12 15.2 14.4Q14.8 17.2 13.6 19Z" fill="#d0d0d0"/></svg>
<svg class="a" style="left:373.3px;top:258px;" width="20" height="20" viewBox="0 0 20 20"><g fill="none" stroke="#e8e8e8" stroke-width="1.3"><path d="M10 1V7.4M10 12.6V19M1 10H7.4M12.6 10H19"/><path d="M7.4 3.6L10 1L12.6 3.6M7.4 16.4L10 19L12.6 16.4M3.6 7.4L1 10L3.6 12.6M16.4 7.4L19 10L16.4 12.6"/></g></svg>
<svg class="a" style="left:373.3px;top:284px;" width="20" height="20" viewBox="0 0 20 20"><g fill="none" stroke="#c4c4c4" stroke-width="1.3"><path d="M13.4 3A7.6 7.6 0 0 1 12.4 17.2M6.6 17A7.6 7.6 0 0 1 7.6 2.8"/><path d="M11.2 1.2L14 3L12.2 6M8.8 18.8L6 17L7.8 14" /></g></svg>
<svg class="a" style="left:373.3px;top:310px;" width="20" height="20" viewBox="0 0 20 20"><g fill="none" stroke="#c4c4c4" stroke-width="1.3"><rect x="1.4" y="1.4" width="17.2" height="17.2" rx="1.6"/><rect x="1.4" y="12.6" width="6" height="6"/><path d="M8.6 11.4L14.8 5.2M10 5H15V10"/></g></svg>
<svg class="a" style="left:373.3px;top:336px;" width="20" height="20" viewBox="0 0 20 20"><path d="M6 3H14M6 17H14M3 6V14M17 6V14" fill="none" stroke="#c4c4c4" stroke-width="1.2"/><g fill="#c4c4c4"><rect x="1" y="1" width="4" height="4" rx="0.8"/><rect x="15" y="1" width="4" height="4" rx="0.8"/><rect x="1" y="15" width="4" height="4" rx="0.8"/><rect x="15" y="15" width="4" height="4" rx="0.8"/></g></svg>
<svg class="a" style="left:373.3px;top:361px;" width="20" height="21" viewBox="0 0 20 21"><g fill="none" stroke="#c4c4c4" stroke-width="1.2"><path d="M16.6 5.6A8.4 8.4 0 1 0 18.2 10"/><path d="M10 5V16.6M4.2 10.8H15.8M8.2 6.8L10 5L11.8 6.8M8.2 14.8L10 16.6L11.8 14.8M6 9L4.2 10.8L6 12.6M14 9L15.8 10.8L14 12.6"/></g><path d="M14.6 1.6H18.6V5.6Z" fill="#c4c4c4"/></svg>
<div class="a" style="left:1322px;top:207px;width:134px;height:149px;background:#05080f;border-radius:5px;"></div>
<div class="a" style="left:1329px;top:215px;width:20px;height:1px;background:#6a6a6a;"></div>
<div class="a" style="left:1329px;top:219px;width:20px;height:1px;background:#6a6a6a;"></div>
<svg class="a" style="left:1322px;top:207px;" width="134" height="149" viewBox="0 0 134 149"><defs><linearGradient id="gcy" x1="0" y1="0" x2="1" y2="0"><stop offset="0" stop-color="#a8a8a8"/><stop offset="0.5" stop-color="#e2e2e2"/><stop offset="1" stop-color="#9c9c9c"/></linearGradient><linearGradient id="gcx" x1="0" y1="0" x2="0" y2="1"><stop offset="0" stop-color="#a8a8a8"/><stop offset="0.5" stop-color="#e2e2e2"/><stop offset="1" stop-color="#9c9c9c"/></linearGradient></defs><path d="M58.6 27.4H75.2L67.4 52.6H66.4Z" fill="#8bdc4a"/><path d="M32 56.6Q30 63 32 69.4L57 63.4V62.6Z" fill="#4f7df0"/><path d="M102 56.6Q104 63 102 69.4L77 63.4V62.6Z" fill="url(#gcx)"/><path d="M60 95.6Q67 98.6 74 95.6L67.4 74H66.6Z" fill="url(#gcy)"/><rect x="58.6" y="54.6" width="16.6" height="18.4" fill="#ececec"/><rect x="58.6" y="54.6" width="16.6" height="2.4" fill="#b8b8b8"/><g fill="#d8d8d8"><rect x="103" y="23.4" width="9.4" height="6.8" rx="1"/></g><path d="M105.2 23.4V21.4A2.6 2.6 0 0 1 110.2 20.6" fill="none" stroke="#d8d8d8" stroke-width="1.3"/><path d="M49.4 120L37 125.4L49.4 130.8M37 125.4H49.4" fill="none" stroke="#c4c4c4" stroke-width="1.1"/></svg>
<span class="a t" id="t32" style="top:212px;font-size:15px;line-height:21px;color:#e6e6e6;font-weight:700;left:1389.00px;transform:translateX(-50%);">y</span>
<span class="a t" id="t33" style="top:257px;font-size:15px;line-height:21px;color:#e6e6e6;font-weight:700;left:1347.00px;transform:translateX(-50%);">z</span>
<span class="a t" id="t34" style="top:322px;font-size:15.6px;line-height:21px;color:#c4c4c4;letter-spacing:-0.188px;-webkit-text-stroke:0.25px #c4c4c4;left:1374.5px;">Persp</span>
<div class="a" style="left:356px;top:591px;width:391px;height:33px;background:#05080f;border-radius:5px;"></div>
<div class="a" style="left:363px;top:597px;width:1px;height:20px;background:#6a6a6a;"></div>
<div class="a" style="left:367px;top:597px;width:1px;height:20px;background:#6a6a6a;"></div>
<div class="a" style="left:376px;top:595px;width:40px;height:25px;background:#46607c;border-radius:4px 0 0 4px;"></div>
<div class="a" style="left:417px;top:595px;width:40px;height:25px;background:#46607c;"></div>
<div class="a" style="left:458px;top:595px;width:40px;height:25px;background:#46607c;"></div>
<div class="a" style="left:499px;top:595px;width:40px;height:25px;background:#46607c;"></div>
<div class="a" style="left:540px;top:595px;width:40px;height:25px;background:#46607c;"></div>
<div class="a" style="left:581px;top:595px;width:40px;height:25px;background:#585858;"></div>
<div class="a" style="left:622px;top:595px;width:40px;height:25px;background:#46607c;"></div>
<div class="a" style="left:663px;top:595px;width:40px;height:25px;background:#585858;"></div>
<div class="a" style="left:704px;top:595px;width:40px;height:25px;background:#585858;border-radius:0 4px 4px 0;"></div>
<svg class="a" style="left:386px;top:596.8px;" width="20" height="20" viewBox="0 0 20 20"><g fill="none" stroke="#e0e0e0" stroke-width="1.3"><path d="M10 1V7.4M10 12.6V19M1 10H7.4M12.6 10H19"/><path d="M7.4 3.6L10 1L12.6 3.6M7.4 16.4L10 19L12.6 16.4M3.6 7.4L1 10L3.6 12.6M16.4 7.4L19 10L16.4 12.6"/></g></svg>
<svg class="a" style="left:427px;top:596.8px;" width="20" height="20" viewBox="0 0 20 20"><g fill="#e0e0e0"><rect x="2" y="1" width="8" height="4.6"/><rect x="7" y="8" width="4" height="4"/><rect x="9" y="14.4" width="4" height="4"/></g><g stroke="#e0e0e0" stroke-width="1.3" fill="none"><path d="M10 3.2H18M2 10H18M2 16.4H18"/></g></svg>
<svg class="a" style="left:468px;top:596.8px;" width="20" height="20" viewBox="0 0 20 20"><path d="M5 1V14M9.6 1V10M14 1V6M1 5H14M1 9.6H10M1 14H6" stroke="#e0e0e0" stroke-width="1.2" fill="none"/><path d="M2 19L19 2M12 19H19M14 15.6H19M16 12.4H19" stroke="#e0e0e0" stroke-width="1.3" fill="none"/></svg>
<svg class="a" style="left:509px;top:596.8px;" width="20" height="20" viewBox="0 0 20 20"><circle cx="10" cy="10" r="8.8" fill="#d8d8d8"/></svg>
<svg class="a" style="left:550px;top:596.8px;" width="20" height="20" viewBox="0 0 20 20"><circle cx="5" cy="4" r="3" fill="#e0e0e0"/><path d="M10 8.4L18.6 13L10 17.6L1.4 13Z" fill="none" stroke="#e0e0e0" stroke-width="1.3"/><path d="M5.6 10.8L14.2 15.4M14.4 10.8L5.8 15.4" stroke="#e0e0e0" stroke-width="1.2"/></svg>
<svg class="a" style="left:591px;top:596.8px;" width="20" height="20" viewBox="0 0 20 20"><circle cx="8.4" cy="8.4" r="5.4" fill="none" stroke="#c4c4c4" stroke-width="1.5"/><path d="M12.4 12.4L17.4 17.4" stroke="#c4c4c4" stroke-width="2"/></svg>
<svg class="a" style="left:632px;top:596.8px;" width="20" height="20" viewBox="0 0 20 20"><g fill="#e0e0e0"><circle cx="10" cy="10" r="2.6"/><circle cx="10" cy="2.4" r="1.8"/><circle cx="10" cy="17.6" r="1.8"/><circle cx="2.4" cy="10" r="1.8"/><circle cx="17.6" cy="10" r="1.8"/></g><path d="M10 2.4V17.6M2.4 10H17.6" stroke="#e0e0e0" stroke-width="1.2"/></svg>
<svg class="a" style="left:673px;top:596.8px;" width="20" height="20" viewBox="0 0 20 20"><rect x="1" y="1" width="11" height="8.6" rx="0.8" fill="#c4c4c4"/><path d="M12.6 4L16.6 1.6V9L12.6 6.6Z" fill="#c4c4c4"/><path d="M6 15Q11.6 9 17.4 15Q11.6 21 6 15Z" fill="none" stroke="#c4c4c4" stroke-width="1.3"/><circle cx="11.6" cy="15" r="1.8" fill="#c4c4c4"/></svg>
<svg class="a" style="left:714px;top:596.8px;" width="20" height="20" viewBox="0 0 20 20"><circle cx="10" cy="10" r="8.4" fill="none" stroke="#c4c4c4" stroke-width="1.3"/><path d="M14.6 5.4L11.6 11.6L5.4 14.6L8.4 8.4Z" fill="#c4c4c4"/><path d="M4.4 15.6L15.6 4.4" stroke="#c4c4c4" stroke-width="1.2"/></svg>
<div class="a" style="left:1461px;top:110px;width:119px;height:30px;background:#3c3c3c;border-radius:4px 4px 0 0;"></div>
<svg class="a" style="left:1475px;top:119.5px;" width="13" height="13" viewBox="0 0 13 13"><circle cx="6.5" cy="6.5" r="6.3" fill="#c4c4c4"/><rect x="5.5" y="5.4" width="2" height="4.8" fill="#3c3c3c"/><circle cx="6.5" cy="3.4" r="1.1" fill="#3c3c3c"/></svg>
<span class="a t" id="t35" style="top:116px;font-size:15.6px;line-height:21px;color:#c4c4c4;letter-spacing:0.293px;-webkit-text-stroke:0.25px #c4c4c4;left:1493px;">Inspector</span>
<svg class="a" style="left:1864px;top:118.5px;" width="12" height="13" viewBox="0 0 12 13"><rect x="1" y="6.5" width="10" height="5.8" rx="0.8" fill="none" stroke="#c4c4c4" stroke-width="1.4"/><path d="M9.3 6.5V3.6A2.6 2.6 0 0 0 4.4 2.6" fill="none" stroke="#c4c4c4" stroke-width="1.4"/></svg>
<svg class="a" style="left:1888px;top:117.8px;" width="6" height="15.4" viewBox="0 0 6 15.4"><circle cx="3" cy="3.0" r="1.6" fill="#c4c4c4"/><circle cx="3" cy="7.7" r="1.6" fill="#c4c4c4"/><circle cx="3" cy="12.4" r="1.6" fill="#c4c4c4"/></svg>
<div class="a" style="left:1461px;top:140px;width:448px;height:844px;background:#383838;"></div>
<div class="a" style="left:1893px;top:140px;width:16px;height:617px;background:#353535;"></div>
<div class="a" style="left:1893px;top:140px;width:1px;height:617px;background:#2c2c2c;"></div>
<svg class="a" style="left:1897px;top:147.5px;" width="9" height="5" viewBox="0 0 9 5"><path d="M0 5H9L4.5 0Z" fill="#c4c4c4"/></svg>
<svg class="a" style="left:1897px;top:743.5px;" width="9" height="5" viewBox="0 0 9 5"><path d="M0 0H9L4.5 5Z" fill="#c4c4c4"/></svg>
<div class="a" style="left:1895px;top:161px;width:13.5px;height:497px;background:#616161;border-radius:6.5px;"></div>
<svg class="a" style="left:1468.5px;top:152px;" width="27" height="27" viewBox="0 0 18 18"><g fill="none" stroke="#c4c4c4" stroke-width="1.0" stroke-linejoin="round"><path d="M9 1.2L16.2 5.1V12.9L9 16.8L1.8 12.9V5.1Z"/><path d="M1.8 5.1L9 9L16.2 5.1M9 9V16.8"/></g></svg>
<svg class="a" style="left:1494px;top:180px;" width="9" height="4.5" viewBox="0 0 9 4.5"><path d="M0 0H9L4.5 4.5Z" fill="#c4c4c4"/></svg>
<div class="a" style="left:1517px;top:154px;width:17px;height:18px;background:#262626;border-radius:3px;box-shadow:inset 0 0 0 1px #1d1d1d;"></div>
<svg class="a" style="left:1519px;top:156.5px;" width="13" height="13" viewBox="0 0 11 11"><path d="M1.5 5.8L4.3 8.6L9.6 2.6" fill="none" stroke="#f0f0f0" stroke-width="2"/></svg>
<div class="a" style="left:1542px;top:151px;width:251px;height:23px;background:#2a2a2a;border-radius:3px;box-shadow:inset 0 0 0 1px #1f1f1f;"></div>
<span class="a t" id="t36" style="top:153px;font-size:15.6px;line-height:21px;color:#d0d0d0;font-weight:700;letter-spacing:-0.188px;left:1546px;">Items</span>
<div class="a" style="left:1797px;top:154px;width:17px;height:18px;background:#2a2a2a;border-radius:3px;box-shadow:inset 0 0 0 1px #1d1d1d;"></div>
<span class="a t" id="t37" style="top:153px;font-size:15.6px;line-height:21px;color:#c4c4c4;letter-spacing:0.300px;-webkit-text-stroke:0.25px #c4c4c4;left:1820px;">Static</span>
<svg class="a" style="left:1875.5px;top:160.5px;" width="10" height="5" viewBox="0 0 10 5"><path d="M0 0H10L5.0 5Z" fill="#c4c4c4"/></svg>
<span class="a t" id="t38" style="top:182px;font-size:15.6px;line-height:21px;color:#c4c4c4;letter-spacing:-0.328px;-webkit-text-stroke:0.25px #c4c4c4;left:1512px;">Tag</span>
<div class="a" style="left:1542.5px;top:181.5px;width:150.0px;height:22.0px;background:#515151;border-radius:3px;box-shadow:inset 0 0 0 1px #474747,0 1px 0 #2a2a2a;"></div>
<span class="a t" id="t39" style="top:181px;font-size:15.6px;line-height:21px;color:#d0d0d0;letter-spacing:0.266px;-webkit-text-stroke:0.25px #d0d0d0;left:1547.5px;">Untagged</span>
<svg class="a" style="left:1675px;top:190.0px;" width="10" height="5" viewBox="0 0 10 5"><path d="M0 0H10L5.0 5Z" fill="#c4c4c4"/></svg>
<span class="a t" id="t40" style="top:182px;font-size:15.6px;line-height:21px;color:#c4c4c4;letter-spacing:-0.004px;-webkit-text-stroke:0.25px #c4c4c4;left:1707px;">Layer</span>
<div class="a" style="left:1751.5px;top:181.5px;width:136.0px;height:22.0px;background:#515151;border-radius:3px;box-shadow:inset 0 0 0 1px #474747,0 1px 0 #2a2a2a;"></div>
<span class="a t" id="t41" style="top:181px;font-size:15.6px;line-height:21px;color:#d0d0d0;letter-spacing:-0.594px;-webkit-text-stroke:0.25px #d0d0d0;left:1756px;">UI</span>
<svg class="a" style="left:1870.5px;top:190.0px;" width="10" height="5" viewBox="0 0 10 5"><path d="M0 0H10L5.0 5Z" fill="#c4c4c4"/></svg>
<div class="a" style="left:1461px;top:214px;width:432px;height:1px;background:#1a1a1a;"></div>
<div class="a" style="left:1461px;top:215px;width:432px;height:26px;background:#3e3e3e;"></div>
<div class="a" style="left:1461px;top:241px;width:432px;height:1px;background:#303030;"></div>
<svg class="a" style="left:1470px;top:224.0px;" width="10" height="9" viewBox="0 0 10 9"><path d="M0 0H10L5.0 9Z" fill="#888"/></svg>
<svg class="a" style="left:1488px;top:220.5px;" width="16" height="15" viewBox="0 0 16 15"><g fill="#c4c4c4"><path d="M0.6 0.6L5.6 2L2 5.6Z"/><path d="M15.4 0.6L10.4 2L14 5.6Z"/><path d="M0.6 14.4L5.6 13L2 9.4Z"/><path d="M15.4 14.4L10.4 13L14 9.4Z"/></g><g stroke="#c4c4c4" stroke-width="1.6"><path d="M3 3L6.4 6.2M13 3L9.6 6.2M3 12L6.4 8.8M13 12L9.6 8.8"/></g></svg>
<span class="a t" id="t42" style="top:218px;font-size:15.6px;line-height:21px;color:#d2d2d2;font-weight:700;letter-spacing:-0.261px;left:1536px;">Rect Transform</span>
<svg class="a" style="left:1820px;top:221.0px;" width="14" height="14" viewBox="0 0 14 14"><circle cx="7" cy="7" r="6.3" fill="#c4c4c4"/><path d="M4.9 5.6A2.1 2.1 0 1 1 7.9 7.4Q7 7.9 7 8.9" fill="none" stroke="#3e3e3e" stroke-width="1.7"/><circle cx="7" cy="11" r="1" fill="#3e3e3e"/></svg>
<svg class="a" style="left:1845.5px;top:221.5px;" width="13" height="13" viewBox="0 0 13 13"><g stroke="#c4c4c4" stroke-width="1.3" fill="none"><path d="M0.4 3.2H6.6M10.2 3.2H12.6"/><path d="M0.4 9.8H2.2M5.8 9.8H12.6"/></g><rect x="7.4" y="0.4" width="2.4" height="5.8" rx="1.1" fill="#c4c4c4"/><rect x="3.8" y="6.8" width="2.2" height="5.8" rx="0.6" fill="#c4c4c4"/></svg>
<svg class="a" style="left:1874px;top:220.3px;" width="6" height="15.4" viewBox="0 0 6 15.4"><circle cx="3" cy="3.0" r="1.6" fill="#c4c4c4"/><circle cx="3" cy="7.7" r="1.6" fill="#c4c4c4"/><circle cx="3" cy="12.4" r="1.6" fill="#c4c4c4"/></svg>
<span class="a t" id="t43" style="top:252px;font-size:12.8px;line-height:19px;color:#c4c4c4;letter-spacing:0.182px;-webkit-text-stroke:0.2px #c4c4c4;left:1496px;">stretch</span>
<span class="a t" id="t44" style="top:289px;font-size:12.8px;line-height:19px;color:#c4c4c4;letter-spacing:0.200px;-webkit-text-stroke:0.2px #c4c4c4;left:1478.60px;transform:translateX(-50%);transform:translateX(-50%) rotate(-90deg);transform-origin:50% 50%;">top</span>
<svg class="a" style="left:1493px;top:276px;" width="48" height="46" viewBox="0 0 48 46"><rect x="2.5" y="2" width="43" height="42.6" fill="none" stroke="#7a7a7a" stroke-width="1"/><path d="M2.5 1.6H45.5" stroke="#c8523e" stroke-width="1"/><rect x="0.6" y="0.2" width="2.2" height="3.8" fill="#f0b800"/><rect x="44.4" y="0.2" width="2.2" height="3.8" fill="#f0b800"/><rect x="13.4" y="12.4" width="20.6" height="20.4" fill="none" stroke="#c4c4c4" stroke-width="1"/><path d="M15 23H32M16.6 20.6V25.4" stroke="#1fb0e6" stroke-width="1" fill="none"/><path d="M14.4 23L16 21V25ZM32.8 23L29.8 20.4V25.6Z" fill="#1fb0e6"/></svg>
<span class="a t" id="t45" style="top:250px;font-size:15.6px;line-height:21px;color:#c4c4c4;letter-spacing:0.828px;-webkit-text-stroke:0.25px #c4c4c4;left:1636px;">Left</span>
<span class="a t" id="t46" style="top:250px;font-size:15.6px;line-height:21px;color:#c4c4c4;letter-spacing:-0.332px;-webkit-text-stroke:0.25px #c4c4c4;left:1721px;">Pos Y</span>
<span class="a t" id="t47" style="top:250px;font-size:15.6px;line-height:21px;color:#c4c4c4;letter-spacing:-0.309px;-webkit-text-stroke:0.25px #c4c4c4;left:1806px;">Pos Z</span>
<div class="a" style="left:1635px;top:272px;width:83px;height:23px;background:#2a2a2a;border-radius:3px;box-shadow:inset 0 0 0 1px #1f1f1f;"></div>
<span class="a t" id="t48" style="top:274px;font-size:15.6px;line-height:21px;color:#d0d0d0;-webkit-text-stroke:0.25px #d0d0d0;left:1638.5px;">0</span>
<div class="a" style="left:1720px;top:272px;width:83px;height:23px;background:#2a2a2a;border-radius:3px;box-shadow:inset 0 0 0 1px #1f1f1f;"></div>
<span class="a t" id="t49" style="top:274px;font-size:15.6px;line-height:21px;color:#d0d0d0;-webkit-text-stroke:0.25px #d0d0d0;left:1723.5px;">0</span>
<div class="a" style="left:1805px;top:272px;width:83px;height:23px;background:#2a2a2a;border-radius:3px;box-shadow:inset 0 0 0 1px #1f1f1f;"></div>
<span class="a t" id="t50" style="top:274px;font-size:15.6px;line-height:21px;color:#d0d0d0;-webkit-text-stroke:0.25px #d0d0d0;left:1808.5px;">0</span>
<span class="a t" id="t51" style="top:296px;font-size:15.6px;line-height:21px;color:#c4c4c4;letter-spacing:-0.102px;-webkit-text-stroke:0.25px #c4c4c4;left:1636px;">Right</span>
<span class="a t" id="t52" style="top:296px;font-size:15.6px;line-height:21px;color:#c4c4c4;letter-spacing:0.284px;-webkit-text-stroke:0.25px #c4c4c4;left:1721px;">Height</span>
<div class="a" style="left:1635px;top:317px;width:83px;height:23px;background:#2a2a2a;border-radius:3px;box-shadow:inset 0 0 0 1px #1f1f1f;"></div>
<span class="a t" id="t53" style="top:319px;font-size:15.6px;line-height:21px;color:#d0d0d0;-webkit-text-stroke:0.25px #d0d0d0;left:1638.5px;">0</span>
<div class="a" style="left:1720px;top:317px;width:83px;height:23px;background:#2a2a2a;border-radius:3px;box-shadow:inset 0 0 0 1px #1f1f1f;"></div>
<span class="a t" id="t54" style="top:319px;font-size:15.6px;line-height:21px;color:#d0d0d0;letter-spacing:0.117px;-webkit-text-stroke:0.25px #d0d0d0;left:1724px;">262.7</span>
<div class="a" style="left:1824px;top:315.5px;width:63.5px;height:24px;background:#46607c;border-radius:3px;box-shadow:0 0 0 0.6px #2a3848;"></div>
<div class="a" style="left:1853px;top:315.5px;width:1px;height:24px;background:#2a3644;"></div>
<svg class="a" style="left:1831.5px;top:320.5px;" width="14" height="14" viewBox="0 0 14 14"><rect x="0.8" y="0.8" width="12.4" height="12.4" fill="none" stroke="#a9b0b8" stroke-width="1.4" stroke-dasharray="3.4 2.8" stroke-dashoffset="1.6"/></svg>
<span class="a t" id="t55" style="top:318px;font-size:14px;line-height:20px;color:#a4abb3;left:1864.5px;">R</span>
<svg class="a" style="left:1470px;top:349.5px;" width="10" height="9" viewBox="0 0 10 9"><path d="M0 0H10L5.0 9Z" fill="#888"/></svg>
<span class="a t" id="t56" style="top:343px;font-size:15.6px;line-height:21px;color:#c4c4c4;letter-spacing:0.047px;-webkit-text-stroke:0.25px #c4c4c4;left:1485.5px;">Anchors</span>
<span class="a t" id="t57" style="top:366px;font-size:15.6px;line-height:21px;color:#c4c4c4;letter-spacing:-0.070px;-webkit-text-stroke:0.25px #c4c4c4;left:1503px;">Min</span>
<span class="a t" id="t58" style="top:366px;font-size:15.6px;line-height:21px;color:#c4c4c4;-webkit-text-stroke:0.25px #c4c4c4;left:1636px;">X</span>
<div class="a" style="left:1649.5px;top:365px;width:67.5px;height:22.5px;background:#2a2a2a;border-radius:3px;box-shadow:inset 0 0 0 1px #1f1f1f;"></div>
<span class="a t" id="t59" style="top:366px;font-size:15.6px;line-height:21px;color:#d0d0d0;-webkit-text-stroke:0.25px #d0d0d0;left:1653.5px;">0</span>
<span class="a t" id="t60" style="top:366px;font-size:15.6px;line-height:21px;color:#c4c4c4;-webkit-text-stroke:0.25px #c4c4c4;left:1721px;">Y</span>
<div class="a" style="left:1735px;top:365px;width:68px;height:22.5px;background:#2a2a2a;border-radius:3px;box-shadow:inset 0 0 0 1px #1f1f1f;"></div>
<span class="a t" id="t61" style="top:366px;font-size:15.6px;line-height:21px;color:#d0d0d0;-webkit-text-stroke:0.25px #d0d0d0;left:1738.5px;">1</span>
<span class="a t" id="t62" style="top:391px;font-size:15.6px;line-height:21px;color:#c4c4c4;letter-spacing:-0.234px;-webkit-text-stroke:0.25px #c4c4c4;left:1503px;">Max</span>
<span class="a t" id="t63" style="top:391px;font-size:15.6px;line-height:21px;color:#c4c4c4;-webkit-text-stroke:0.25px #c4c4c4;left:1636px;">X</span>
<div class="a" style="left:1649.5px;top:390px;width:67.5px;height:22.5px;background:#2a2a2a;border-radius:3px;box-shadow:inset 0 0 0 1px #1f1f1f;"></div>
<span class="a t" id="t64" style="top:391px;font-size:15.6px;line-height:21px;color:#d0d0d0;-webkit-text-stroke:0.25px #d0d0d0;left:1653.5px;">1</span>
<span class="a t" id="t65" style="top:391px;font-size:15.6px;line-height:21px;color:#c4c4c4;-webkit-text-stroke:0.25px #c4c4c4;left:1721px;">Y</span>
<div class="a" style="left:1735px;top:390px;width:68px;height:22.5px;background:#2a2a2a;border-radius:3px;box-shadow:inset 0 0 0 1px #1f1f1f;"></div>
<span class="a t" id="t66" style="top:391px;font-size:15.6px;line-height:21px;color:#d0d0d0;-webkit-text-stroke:0.25px #d0d0d0;left:1738.5px;">1</span>
<span class="a t" id="t67" style="top:418px;font-size:15.6px;line-height:21px;color:#c4c4c4;letter-spacing:-0.043px;-webkit-text-stroke:0.25px #c4c4c4;left:1485.5px;">Pivot</span>
<span class="a t" id="t68" style="top:418px;font-size:15.6px;line-height:21px;color:#c4c4c4;-webkit-text-stroke:0.25px #c4c4c4;left:1636px;">X</span>
<div class="a" style="left:1649.5px;top:417px;width:67.5px;height:23px;background:#2a2a2a;border-radius:3px;box-shadow:inset 0 0 0 1px #1f1f1f;"></div>
<span class="a t" id="t69" style="top:419px;font-size:15.6px;line-height:21px;color:#d0d0d0;-webkit-text-stroke:0.25px #d0d0d0;left:1653.5px;">0.5</span>
<span class="a t" id="t70" style="top:418px;font-size:15.6px;line-height:21px;color:#c4c4c4;-webkit-text-stroke:0.25px #c4c4c4;left:1721px;">Y</span>
<div class="a" style="left:1735px;top:417px;width:68px;height:23px;background:#2a2a2a;border-radius:3px;box-shadow:inset 0 0 0 1px #1f1f1f;"></div>
<span class="a t" id="t71" style="top:419px;font-size:15.6px;line-height:21px;color:#d0d0d0;-webkit-text-stroke:0.25px #d0d0d0;left:1738.5px;">1</span>
<span class="a t" id="t72" style="top:453px;font-size:15.6px;line-height:21px;color:#c4c4c4;letter-spacing:-0.013px;-webkit-text-stroke:0.25px #c4c4c4;left:1485.5px;">Rotation</span>
<span class="a t" id="t73" style="top:453px;font-size:15.6px;line-height:21px;color:#c4c4c4;-webkit-text-stroke:0.25px #c4c4c4;left:1640px;">X</span>
<div class="a" style="left:1658px;top:452px;width:61px;height:23px;background:#2a2a2a;border-radius:3px;box-shadow:inset 0 0 0 1px #1f1f1f;"></div>
<span class="a t" id="t74" style="top:454px;font-size:15.6px;line-height:21px;color:#d0d0d0;-webkit-text-stroke:0.25px #d0d0d0;left:1661.5px;">0</span>
<span class="a t" id="t75" style="top:453px;font-size:15.6px;line-height:21px;color:#c4c4c4;-webkit-text-stroke:0.25px #c4c4c4;left:1725.5px;">Y</span>
<div class="a" style="left:1743px;top:452px;width:61px;height:23px;background:#2a2a2a;border-radius:3px;box-shadow:inset 0 0 0 1px #1f1f1f;"></div>
<span class="a t" id="t76" style="top:454px;font-size:15.6px;line-height:21px;color:#d0d0d0;-webkit-text-stroke:0.25px #d0d0d0;left:1746.5px;">0</span>
<span class="a t" id="t77" style="top:453px;font-size:15.6px;line-height:21px;color:#c4c4c4;-webkit-text-stroke:0.25px #c4c4c4;left:1809.5px;">Z</span>
<div class="a" style="left:1827px;top:452px;width:61px;height:23px;background:#2a2a2a;border-radius:3px;box-shadow:inset 0 0 0 1px #1f1f1f;"></div>
<span class="a t" id="t78" style="top:454px;font-size:15.6px;line-height:21px;color:#d0d0d0;-webkit-text-stroke:0.25px #d0d0d0;left:1830.5px;">0</span>
<span class="a t" id="t79" style="top:478px;font-size:15.6px;line-height:21px;color:#c4c4c4;letter-spacing:-0.254px;-webkit-text-stroke:0.25px #c4c4c4;left:1485.5px;">Scale</span>
<span class="a t" id="t80" style="top:478px;font-size:15.6px;line-height:21px;color:#c4c4c4;-webkit-text-stroke:0.25px #c4c4c4;left:1640px;">X</span>
<div class="a" style="left:1658px;top:477px;width:61px;height:23px;background:#2a2a2a;border-radius:3px;box-shadow:inset 0 0 0 1px #1f1f1f;"></div>
<span class="a t" id="t81" style="top:479px;font-size:15.6px;line-height:21px;color:#d0d0d0;-webkit-text-stroke:0.25px #d0d0d0;left:1661.5px;">1</span>
<span class="a t" id="t82" style="top:478px;font-size:15.6px;line-height:21px;color:#c4c4c4;-webkit-text-stroke:0.25px #c4c4c4;left:1725.5px;">Y</span>
<div class="a" style="left:1743px;top:477px;width:61px;height:23px;background:#2a2a2a;border-radius:3px;box-shadow:inset 0 0 0 1px #1f1f1f;"></div>
<span class="a t" id="t83" style="top:479px;font-size:15.6px;line-height:21px;color:#d0d0d0;-webkit-text-stroke:0.25px #d0d0d0;left:1746.5px;">1</span>
<span class="a t" id="t84" style="top:478px;font-size:15.6px;line-height:21px;color:#c4c4c4;-webkit-text-stroke:0.25px #c4c4c4;left:1809.5px;">Z</span>
<div class="a" style="left:1827px;top:477px;width:61px;height:23px;background:#2a2a2a;border-radius:3px;box-shadow:inset 0 0 0 1px #1f1f1f;"></div>
<span class="a t" id="t85" style="top:479px;font-size:15.6px;line-height:21px;color:#d0d0d0;-webkit-text-stroke:0.25px #d0d0d0;left:1830.5px;">1</span>
<svg class="a" style="left:1612px;top:481.5px;" width="17" height="13" viewBox="0 0 17 13"><g fill="none" stroke="#c4c4c4" stroke-width="1.4"><path d="M7.2 3H4.6A3.5 3.5 0 0 0 4.6 10H7.2M9.8 3H12.4A3.5 3.5 0 0 1 12.4 10H9.8"/></g><path d="M1 0.6L15.6 12.4" stroke="#383838" stroke-width="3"/><path d="M1 0.6L15.6 12.4" stroke="#c4c4c4" stroke-width="1.2"/></svg>
<div class="a" style="left:1461px;top:512px;width:432px;height:1px;background:#1a1a1a;"></div>
<div class="a" style="left:1461px;top:513px;width:432px;height:26px;background:#3e3e3e;"></div>
<div class="a" style="left:1461px;top:539px;width:432px;height:1px;background:#303030;"></div>
<svg class="a" style="left:1470px;top:522.0px;" width="10" height="9" viewBox="0 0 10 9"><path d="M0 0H10L5.0 9Z" fill="#888"/></svg>
<svg class="a" style="left:1486px;top:518.5px;" width="21" height="15" viewBox="0 0 21 15"><path d="M1 7.5Q10.5 -3 20 7.5Q10.5 18 1 7.5Z" fill="none" stroke="#c4c4c4" stroke-width="1.4"/><circle cx="10.5" cy="7.5" r="3.4" fill="none" stroke="#c4c4c4" stroke-width="1.4"/><circle cx="10.5" cy="7.5" r="1.3" fill="#c4c4c4"/></svg>
<span class="a t" id="t86" style="top:516px;font-size:15.6px;line-height:21px;color:#d2d2d2;font-weight:700;letter-spacing:-0.342px;left:1536px;">Canvas Renderer</span>
<svg class="a" style="left:1820px;top:519.0px;" width="14" height="14" viewBox="0 0 14 14"><circle cx="7" cy="7" r="6.3" fill="#c4c4c4"/><path d="M4.9 5.6A2.1 2.1 0 1 1 7.9 7.4Q7 7.9 7 8.9" fill="none" stroke="#3e3e3e" stroke-width="1.7"/><circle cx="7" cy="11" r="1" fill="#3e3e3e"/></svg>
<svg class="a" style="left:1845.5px;top:519.5px;" width="13" height="13" viewBox="0 0 13 13"><g stroke="#c4c4c4" stroke-width="1.3" fill="none"><path d="M0.4 3.2H6.6M10.2 3.2H12.6"/><path d="M0.4 9.8H2.2M5.8 9.8H12.6"/></g><rect x="7.4" y="0.4" width="2.4" height="5.8" rx="1.1" fill="#c4c4c4"/><rect x="3.8" y="6.8" width="2.2" height="5.8" rx="0.6" fill="#c4c4c4"/></svg>
<svg class="a" style="left:1874px;top:518.3px;" width="6" height="15.4" viewBox="0 0 6 15.4"><circle cx="3" cy="3.0" r="1.6" fill="#c4c4c4"/><circle cx="3" cy="7.7" r="1.6" fill="#c4c4c4"/><circle cx="3" cy="12.4" r="1.6" fill="#c4c4c4"/></svg>
<span class="a t" id="t87" style="top:546px;font-size:15.6px;line-height:21px;color:#c4c4c4;letter-spacing:0.068px;-webkit-text-stroke:0.25px #c4c4c4;left:1485.5px;">Cull Transparent Mes</span>
<div class="a" style="left:1638px;top:548px;width:17px;height:18px;background:#2a2a2a;border-radius:3px;box-shadow:inset 0 0 0 1px #1d1d1d;"></div>
<div class="a" style="left:1461px;top:579px;width:432px;height:1px;background:#1a1a1a;"></div>
<div class="a" style="left:1461px;top:580px;width:432px;height:26px;background:#3e3e3e;"></div>
<div class="a" style="left:1461px;top:606px;width:432px;height:1px;background:#303030;"></div>
<svg class="a" style="left:1470px;top:589.0px;" width="10" height="9" viewBox="0 0 10 9"><path d="M0 0H10L5.0 9Z" fill="#888"/></svg>
<svg class="a" style="left:1486px;top:583.5px;" width="20" height="19" viewBox="0 0 20 19"><rect x="0.6" y="0.6" width="18.8" height="17.8" rx="1.2" fill="#d0d0d0"/><rect x="2" y="2" width="16" height="15" fill="#2c2c2c"/><rect x="4" y="3.6" width="4.4" height="11.8" fill="none" stroke="#d8d8d8" stroke-width="1.2"/><rect x="11.4" y="3.6" width="4.4" height="11.8" fill="none" stroke="#d8d8d8" stroke-width="1.2"/></svg>
<div class="a" style="left:1511px;top:584.5px;width:17px;height:18px;background:#262626;border-radius:3px;box-shadow:inset 0 0 0 1px #1d1d1d;"></div>
<svg class="a" style="left:1513px;top:587.0px;" width="13" height="13" viewBox="0 0 11 11"><path d="M1.5 5.8L4.3 8.6L9.6 2.6" fill="none" stroke="#f0f0f0" stroke-width="2"/></svg>
<span class="a t" id="t88" style="top:583px;font-size:15.6px;line-height:21px;color:#d2d2d2;font-weight:700;letter-spacing:-0.354px;left:1536px;">Horizontal Layout Group</span>
<svg class="a" style="left:1820px;top:586.0px;" width="14" height="14" viewBox="0 0 14 14"><circle cx="7" cy="7" r="6.3" fill="#c4c4c4"/><path d="M4.9 5.6A2.1 2.1 0 1 1 7.9 7.4Q7 7.9 7 8.9" fill="none" stroke="#3e3e3e" stroke-width="1.7"/><circle cx="7" cy="11" r="1" fill="#3e3e3e"/></svg>
<svg class="a" style="left:1845.5px;top:586.5px;" width="13" height="13" viewBox="0 0 13 13"><g stroke="#c4c4c4" stroke-width="1.3" fill="none"><path d="M0.4 3.2H6.6M10.2 3.2H12.6"/><path d="M0.4 9.8H2.2M5.8 9.8H12.6"/></g><rect x="7.4" y="0.4" width="2.4" height="5.8" rx="1.1" fill="#c4c4c4"/><rect x="3.8" y="6.8" width="2.2" height="5.8" rx="0.6" fill="#c4c4c4"/></svg>
<svg class="a" style="left:1874px;top:585.3px;" width="6" height="15.4" viewBox="0 0 6 15.4"><circle cx="3" cy="3.0" r="1.6" fill="#c4c4c4"/><circle cx="3" cy="7.7" r="1.6" fill="#c4c4c4"/><circle cx="3" cy="12.4" r="1.6" fill="#c4c4c4"/></svg>
<svg class="a" style="left:1471px;top:618px;" width="8.5" height="10" viewBox="0 0 8.5 10"><path d="M0 0V10L8.5 5.0Z" fill="#888"/></svg>
<span class="a t" id="t89" style="top:613px;font-size:15.6px;line-height:21px;color:#c4c4c4;letter-spacing:-0.039px;-webkit-text-stroke:0.25px #c4c4c4;left:1485.5px;">Padding</span>
<span class="a t" id="t90" style="top:638px;font-size:15.6px;line-height:21px;color:#c4c4c4;letter-spacing:-0.060px;-webkit-text-stroke:0.25px #c4c4c4;left:1485.5px;">Spacing</span>
<div class="a" style="left:1638px;top:637px;width:249px;height:22.5px;background:#2a2a2a;border-radius:3px;box-shadow:inset 0 0 0 1px #1f1f1f;"></div>
<span class="a t" id="t91" style="top:638px;font-size:15.6px;line-height:21px;color:#d0d0d0;-webkit-text-stroke:0.25px #d0d0d0;left:1642.5px;">5</span>
<span class="a t" id="t92" style="top:663px;font-size:15.6px;line-height:21px;color:#c4c4c4;letter-spacing:0.189px;-webkit-text-stroke:0.25px #c4c4c4;left:1485.5px;">Child Alignment</span>
<div class="a" style="left:1638px;top:663px;width:249px;height:21.5px;background:#515151;border-radius:3px;box-shadow:inset 0 0 0 1px #474747,0 1px 0 #2a2a2a;"></div>
<span class="a t" id="t93" style="top:662px;font-size:15.6px;line-height:21px;color:#d0d0d0;letter-spacing:0.243px;-webkit-text-stroke:0.25px #d0d0d0;left:1643px;">Middle Center</span>
<svg class="a" style="left:1870.5px;top:671.25px;" width="10" height="5" viewBox="0 0 10 5"><path d="M0 0H10L5.0 5Z" fill="#c4c4c4"/></svg>
<div class="a" style="left:1485px;top:688px;width:150px;height:22px;overflow:hidden;"><span class="a t" id="t94" style="top:0px;font-size:15.6px;line-height:21px;color:#c4c4c4;letter-spacing:-0.010px;-webkit-text-stroke:0.25px #c4c4c4;left:0.5px;">Reverse Arrangement</span></div>
<div class="a" style="left:1638px;top:690px;width:17px;height:18px;background:#2a2a2a;border-radius:3px;box-shadow:inset 0 0 0 1px #1d1d1d;"></div>
<span class="a t" id="t95" style="top:713px;font-size:15.6px;line-height:21px;color:#c4c4c4;letter-spacing:0.070px;-webkit-text-stroke:0.25px #c4c4c4;left:1485.5px;">Control Child Size</span>
<div class="a" style="left:1638px;top:715px;width:17px;height:18px;background:#2a2a2a;border-radius:3px;box-shadow:inset 0 0 0 1px #1d1d1d;"></div>
<span class="a t" id="t96" style="top:713px;font-size:15.6px;line-height:21px;color:#c4c4c4;letter-spacing:0.281px;-webkit-text-stroke:0.25px #c4c4c4;left:1661px;">Width</span>
<div class="a" style="left:1722px;top:715px;width:17px;height:18px;background:#2a2a2a;border-radius:3px;box-shadow:inset 0 0 0 1px #1d1d1d;"></div>
<span class="a t" id="t97" style="top:713px;font-size:15.6px;line-height:21px;color:#c4c4c4;letter-spacing:0.284px;-webkit-text-stroke:0.25px #c4c4c4;left:1745px;">Height</span>
<div class="a" style="left:1461px;top:740px;width:432px;height:17px;overflow:hidden;"><span class="a t" id="t98" style="top:-2px;font-size:15.6px;line-height:21px;color:#c4c4c4;letter-spacing:-0.032px;-webkit-text-stroke:0.25px #c4c4c4;left:24.5px;">Use Child Scale</span><div class="a" style="left:177px;top:0px;width:17px;height:18px;background:#2a2a2a;border-radius:3px;box-shadow:inset 0 0 0 1px #1d1d1d;"></div><span class="a t" id="t99" style="top:-2px;font-size:15.6px;line-height:21px;color:#c4c4c4;letter-spacing:0.281px;-webkit-text-stroke:0.25px #c4c4c4;left:200px;">Width</span><div class="a" style="left:261px;top:0px;width:17px;height:18px;background:#2a2a2a;border-radius:3px;box-shadow:inset 0 0 0 1px #1d1d1d;"></div><span class="a t" id="t100" style="top:-2px;font-size:15.6px;line-height:21px;color:#c4c4c4;letter-spacing:0.284px;-webkit-text-stroke:0.25px #c4c4c4;left:284px;">Height</span></div>
<div class="a" style="left:1461px;top:756px;width:448px;height:1px;background:#1e1e1e;"></div>
<div class="a" style="left:1461px;top:757px;width:448px;height:26px;background:#3c3c3c;"></div>
<div class="a" style="left:1461px;top:783px;width:448px;height:1px;background:#232323;"></div>
<span class="a t" id="t101" style="top:760px;font-size:15.6px;line-height:21px;color:#d2d2d2;font-weight:700;letter-spacing:-0.286px;left:1470px;">Layout Properties</span>
<div class="a" style="left:1605px;top:768.5px;width:280px;height:1px;background:#6a6a6a;"></div>
<div class="a" style="left:1605px;top:772px;width:280px;height:1px;background:#6a6a6a;"></div>
<div class="a" style="left:1887px;top:758px;width:1px;height:25px;background:#2a2a2a;"></div>
<svg class="a" style="left:1896px;top:762.3px;" width="6" height="15.4" viewBox="0 0 6 15.4"><circle cx="3" cy="3.0" r="1.6" fill="#c4c4c4"/><circle cx="3" cy="7.7" r="1.6" fill="#c4c4c4"/><circle cx="3" cy="12.4" r="1.6" fill="#c4c4c4"/></svg>
<div class="a" style="left:1461px;top:784px;width:448px;height:192px;background:#2f2f2f;"></div>
<span class="a t" id="t102" style="top:791px;font-size:15.6px;line-height:21px;color:#d2d2d2;font-weight:700;letter-spacing:-0.234px;left:1468px;">Property</span>
<span class="a t" id="t103" style="top:791px;font-size:15.6px;line-height:21px;color:#d2d2d2;font-weight:700;letter-spacing:-0.312px;left:1606.5px;">Value</span>
<span class="a t" id="t104" style="top:791px;font-size:15.6px;line-height:21px;color:#d2d2d2;font-weight:700;letter-spacing:-0.475px;left:1731px;">Source</span>
<span class="a t" id="t105" style="top:816px;font-size:15.6px;line-height:21px;color:#c4c4c4;letter-spacing:0.209px;-webkit-text-stroke:0.25px #c4c4c4;left:1468px;">Min Width</span>
<span class="a t" id="t106" style="top:816px;font-size:15.6px;line-height:21px;color:#c4c4c4;-webkit-text-stroke:0.25px #c4c4c4;left:1606.5px;">0</span>
<span class="a t" id="t107" style="top:816px;font-size:15.6px;line-height:21px;color:#c4c4c4;letter-spacing:0.131px;-webkit-text-stroke:0.25px #c4c4c4;left:1731px;">HorizontalLayoutGroup</span>
<span class="a t" id="t108" style="top:838px;font-size:15.6px;line-height:21px;color:#c4c4c4;letter-spacing:0.161px;-webkit-text-stroke:0.25px #c4c4c4;left:1468px;">Min Height</span>
<span class="a t" id="t109" style="top:838px;font-size:15.6px;line-height:21px;color:#c4c4c4;-webkit-text-stroke:0.25px #c4c4c4;left:1606.5px;">0</span>
<span class="a t" id="t110" style="top:838px;font-size:15.6px;line-height:21px;color:#c4c4c4;letter-spacing:0.131px;-webkit-text-stroke:0.25px #c4c4c4;left:1731px;">HorizontalLayoutGroup</span>
<span class="a t" id="t111" style="top:861px;font-size:15.6px;line-height:21px;color:#c4c4c4;letter-spacing:0.164px;-webkit-text-stroke:0.25px #c4c4c4;left:1468px;">Preferred Width</span>
<span class="a t" id="t112" style="top:861px;font-size:15.6px;line-height:21px;color:#c4c4c4;-webkit-text-stroke:0.25px #c4c4c4;left:1606.5px;">0</span>
<span class="a t" id="t113" style="top:861px;font-size:15.6px;line-height:21px;color:#c4c4c4;letter-spacing:0.131px;-webkit-text-stroke:0.25px #c4c4c4;left:1731px;">HorizontalLayoutGroup</span>
<span class="a t" id="t114" style="top:883px;font-size:15.6px;line-height:21px;color:#c4c4c4;letter-spacing:0.172px;-webkit-text-stroke:0.25px #c4c4c4;left:1468px;">Preferred Height</span>
<span class="a t" id="t115" style="top:883px;font-size:15.6px;line-height:21px;color:#c4c4c4;-webkit-text-stroke:0.25px #c4c4c4;left:1606.5px;">0</span>
<span class="a t" id="t116" style="top:883px;font-size:15.6px;line-height:21px;color:#c4c4c4;letter-spacing:0.131px;-webkit-text-stroke:0.25px #c4c4c4;left:1731px;">HorizontalLayoutGroup</span>
<span class="a t" id="t117" style="top:906px;font-size:15.6px;line-height:21px;color:#c4c4c4;letter-spacing:0.120px;-webkit-text-stroke:0.25px #c4c4c4;left:1468px;">Flexible Width</span>
<span class="a t" id="t118" style="top:906px;font-size:15.6px;line-height:21px;color:#c4c4c4;letter-spacing:0.129px;-webkit-text-stroke:0.25px #c4c4c4;left:1606.5px;">disabled</span>
<span class="a t" id="t119" style="top:906px;font-size:15.6px;line-height:21px;color:#c4c4c4;letter-spacing:0.131px;-webkit-text-stroke:0.25px #c4c4c4;left:1731px;">HorizontalLayoutGroup</span>
<span class="a t" id="t120" style="top:928px;font-size:15.6px;line-height:21px;color:#c4c4c4;letter-spacing:0.132px;-webkit-text-stroke:0.25px #c4c4c4;left:1468px;">Flexible Height</span>
<span class="a t" id="t121" style="top:928px;font-size:15.6px;line-height:21px;color:#c4c4c4;letter-spacing:0.129px;-webkit-text-stroke:0.25px #c4c4c4;left:1606.5px;">disabled</span>
<span class="a t" id="t122" style="top:928px;font-size:15.6px;line-height:21px;color:#c4c4c4;letter-spacing:0.131px;-webkit-text-stroke:0.25px #c4c4c4;left:1731px;">HorizontalLayoutGroup</span>
<div class="a" style="left:1461px;top:960px;width:448px;height:15px;overflow:hidden;"><span class="a t" id="t123" style="top:3px;font-size:15.6px;line-height:21px;color:#c4c4c4;letter-spacing:0.109px;-webkit-text-stroke:0.25px #c4c4c4;left:7px;">Add a LayoutElement to override values.</span></div>
<div class="a" style="left:1461px;top:975px;width:448px;height:1px;background:#1e1e1e;"></div>
<div class="a" style="left:1461px;top:976px;width:448px;height:8px;background:#3c3c3c;"></div>
<div class="a" style="left:9px;top:629px;width:101px;height:30px;background:#3c3c3c;border-radius:4px 4px 0 0;"></div>
<svg class="a" style="left:20px;top:638.5px;" width="16" height="13.5" viewBox="0 0 16 14"><path d="M0.8 1.6Q0.8 0.8 1.6 0.8H5.8L7.4 3H14.4Q15.2 3 15.2 3.8V12.4Q15.2 13.2 14.4 13.2H1.6Q0.8 13.2 0.8 12.4Z" fill="#c4c4c4"/></svg>
<span class="a t" id="t124" style="top:635px;font-size:15.6px;line-height:21px;color:#c4c4c4;letter-spacing:0.159px;-webkit-text-stroke:0.25px #c4c4c4;left:40px;">Project</span>
<svg class="a" style="left:124px;top:638px;" width="13" height="13" viewBox="0 0 13 13"><rect x="0.6" y="0.6" width="11.8" height="11.8" fill="#d0d0d0"/><path d="M2.4 3.4H10.6M2.4 5.8H10.6M2.4 8.2H10.6M2.4 10.4H10.6" stroke="#141414" stroke-width="1"/></svg>
<span class="a t" id="t125" style="top:635px;font-size:15.6px;line-height:21px;color:#d0d0d0;letter-spacing:0.047px;-webkit-text-stroke:0.25px #d0d0d0;left:142.5px;">Console</span>
<svg class="a" style="left:1415px;top:637.5px;" width="12" height="13" viewBox="0 0 12 13"><rect x="1" y="6.5" width="10" height="5.8" rx="0.8" fill="none" stroke="#c4c4c4" stroke-width="1.4"/><path d="M9.3 6.5V3.6A2.6 2.6 0 0 0 4.4 2.6" fill="none" stroke="#c4c4c4" stroke-width="1.4"/></svg>
<svg class="a" style="left:1439px;top:636.8px;" width="6" height="15.4" viewBox="0 0 6 15.4"><circle cx="3" cy="3.0" r="1.6" fill="#c4c4c4"/><circle cx="3" cy="7.7" r="1.6" fill="#c4c4c4"/><circle cx="3" cy="12.4" r="1.6" fill="#c4c4c4"/></svg>
<div class="a" style="left:9px;top:659px;width:1450px;height:26px;background:#3c3c3c;"></div>
<div class="a" style="left:9px;top:684px;width:1450px;height:1px;background:#242424;"></div>
<svg class="a" style="left:17px;top:664.5px;" width="16" height="16" viewBox="0 0 16 16"><path d="M8 0.6V15.4M0.6 8H15.4" stroke="#c4c4c4" stroke-width="1.6"/></svg>
<svg class="a" style="left:38px;top:669.5px;" width="9" height="5" viewBox="0 0 9 5"><path d="M0 0H9L4.5 5Z" fill="#c4c4c4"/></svg>
<div class="a" style="left:876px;top:662.5px;width:396.5px;height:19px;background:#2a2a2a;border-radius:3px;box-shadow:inset 0 0 0 1px #1c1c1c;"></div>
<svg class="a" style="left:881px;top:666.5px;" width="12" height="12" viewBox="0 0 12 12"><circle cx="4.6" cy="4.6" r="3" fill="none" stroke="#c4c4c4" stroke-width="1.6"/><path d="M6.8 6.8L10.6 10.6" stroke="#c4c4c4" stroke-width="2" stroke-linecap="round"/></svg>
<div class="a" style="left:1251px;top:663.5px;width:1px;height:17px;background:#1c1c1c;"></div>
<svg class="a" style="left:1254px;top:664.5px;" width="16" height="15" viewBox="0 0 16 15"><g fill="none" stroke="#c4c4c4" stroke-width="1.2"><path d="M4.4 1H14V10.8H9.6"/><rect x="1" y="8.4" width="5" height="5" /><path d="M6.6 8.4L11.6 3.6M8 3.4H11.8V7.2"/></g></svg>
<div class="a" style="left:1276px;top:660px;width:1px;height:24px;background:#2e2e2e;"></div>
<div class="a" style="left:1309px;top:660px;width:1px;height:24px;background:#2e2e2e;"></div>
<div class="a" style="left:1341.5px;top:660px;width:1px;height:24px;background:#2e2e2e;"></div>
<div class="a" style="left:1374px;top:660px;width:1px;height:24px;background:#2e2e2e;"></div>
<div class="a" style="left:1406px;top:660px;width:1px;height:24px;background:#2e2e2e;"></div>
<svg class="a" style="left:1284px;top:663px;" width="16" height="17" viewBox="0 0 16 17"><g fill="#c4c4c4"><rect x="2" y="0.6" width="7" height="7"/><circle cx="4.4" cy="12.2" r="4.2"/><path d="M12 5.6L15.8 12.4H8.2Z"/></g></svg>
<svg class="a" style="left:1317px;top:665px;" width="15" height="14" viewBox="0 0 15 14"><path d="M7.6 0.8H13.4Q14.2 0.8 14.2 1.6V6.8L7.4 13.4Q6.8 14 6.2 13.4L1 8.2Q0.4 7.6 1 7Z" fill="#c4c4c4" transform="rotate(8 7 7)"/><circle cx="11" cy="4.2" r="1.2" fill="#3c3c3c"/></svg>
<svg class="a" style="left:1349px;top:663.5px;" width="17" height="17" viewBox="0 0 17 17"><circle cx="8.5" cy="8.5" r="8" fill="#d8d8d8"/><rect x="7.4" y="3.6" width="2.2" height="6.4" rx="1" fill="#3c3c3c"/><circle cx="8.5" cy="12.6" r="1.3" fill="#3c3c3c"/></svg>
<svg class="a" style="left:1382.5px;top:664.5px;" width="15" height="15" viewBox="0 0 15 15"><path d="M7.5 0.6L9.6 5.2L14.6 5.8L10.9 9.2L11.9 14.2L7.5 11.7L3.1 14.2L4.1 9.2L0.4 5.8L5.4 5.2Z" fill="#9a9a9a"/></svg>
<svg class="a" style="left:1414.5px;top:666px;" width="18" height="12" viewBox="0 0 18 12"><path d="M0.8 6Q9 -3 17.2 6Q9 15 0.8 6Z" fill="none" stroke="#6a6a6a" stroke-width="1.3"/><circle cx="9" cy="5.4" r="3.2" fill="#6a6a6a"/></svg>
<span class="a t" id="t126" style="top:662px;font-size:15.6px;line-height:21px;color:#9a9a9a;letter-spacing:0.141px;-webkit-text-stroke:0.25px #9a9a9a;left:1435px;">23</span>
<div class="a" style="left:9px;top:685px;width:242px;height:299px;background:#383838;"></div>
<div class="a" style="left:9px;top:964px;width:242px;height:20px;background:#4d4d4d;"></div>
<svg class="a" style="left:101px;top:687.25px;" width="16" height="13.5" viewBox="0 0 16 14"><path d="M0.8 1.6Q0.8 0.8 1.6 0.8H5.8L7.4 3H14.4Q15.2 3 15.2 3.8V12.4Q15.2 13.2 14.4 13.2H1.6Q0.8 13.2 0.8 12.4Z" fill="#c4c4c4"/></svg>
<span class="a t" id="t127" style="top:683px;font-size:15.6px;line-height:21px;color:#c4c4c4;letter-spacing:-0.104px;-webkit-text-stroke:0.25px #c4c4c4;left:121.5px;">Corn</span>
<svg class="a" style="left:101px;top:707.25px;" width="16" height="13.5" viewBox="0 0 16 14"><path d="M0.8 1.6Q0.8 0.8 1.6 0.8H5.8L7.4 3H14.4Q15.2 3 15.2 3.8V12.4Q15.2 13.2 14.4 13.2H1.6Q0.8 13.2 0.8 12.4Z" fill="#c4c4c4"/></svg>
<span class="a t" id="t128" style="top:703px;font-size:15.6px;line-height:21px;color:#c4c4c4;letter-spacing:-0.209px;-webkit-text-stroke:0.25px #c4c4c4;left:121.5px;">Daikon</span>
<svg class="a" style="left:101px;top:727.25px;" width="16" height="13.5" viewBox="0 0 16 14"><path d="M0.8 1.6Q0.8 0.8 1.6 0.8H5.8L7.4 3H14.4Q15.2 3 15.2 3.8V12.4Q15.2 13.2 14.4 13.2H1.6Q0.8 13.2 0.8 12.4Z" fill="#c4c4c4"/></svg>
<span class="a t" id="t129" style="top:723px;font-size:15.6px;line-height:21px;color:#c4c4c4;letter-spacing:-0.009px;-webkit-text-stroke:0.25px #c4c4c4;left:121.5px;">Eggplant</span>
<svg class="a" style="left:101px;top:747.25px;" width="16" height="13.5" viewBox="0 0 16 14"><path d="M0.8 1.6Q0.8 0.8 1.6 0.8H5.8L7.4 3H14.4Q15.2 3 15.2 3.8V12.4Q15.2 13.2 14.4 13.2H1.6Q0.8 13.2 0.8 12.4Z" fill="#c4c4c4"/></svg>
<span class="a t" id="t130" style="top:743px;font-size:15.6px;line-height:21px;color:#c4c4c4;letter-spacing:0.122px;-webkit-text-stroke:0.25px #c4c4c4;left:121.5px;">Millet</span>
<svg class="a" style="left:101px;top:767.25px;" width="16" height="13.5" viewBox="0 0 16 14"><path d="M0.8 1.6Q0.8 0.8 1.6 0.8H5.8L7.4 3H14.4Q15.2 3 15.2 3.8V12.4Q15.2 13.2 14.4 13.2H1.6Q0.8 13.2 0.8 12.4Z" fill="#c4c4c4"/></svg>
<span class="a t" id="t131" style="top:763px;font-size:15.6px;line-height:21px;color:#c4c4c4;letter-spacing:-0.409px;-webkit-text-stroke:0.25px #c4c4c4;left:121.5px;">Radish</span>
<svg class="a" style="left:101px;top:787.25px;" width="16" height="13.5" viewBox="0 0 16 14"><path d="M0.8 1.6Q0.8 0.8 1.6 0.8H5.8L7.4 3H14.4Q15.2 3 15.2 3.8V12.4Q15.2 13.2 14.4 13.2H1.6Q0.8 13.2 0.8 12.4Z" fill="#c4c4c4"/></svg>
<span class="a t" id="t132" style="top:783px;font-size:15.6px;line-height:21px;color:#c4c4c4;letter-spacing:0.172px;-webkit-text-stroke:0.25px #c4c4c4;left:121.5px;">Tomato</span>
<svg class="a" style="left:83px;top:807.25px;" width="16" height="13.5" viewBox="0 0 16 14"><path d="M0.8 1.6Q0.8 0.8 1.6 0.8H5.8L7.4 3H14.4Q15.2 3 15.2 3.8V12.4Q15.2 13.2 14.4 13.2H1.6Q0.8 13.2 0.8 12.4Z" fill="#c4c4c4"/></svg>
<span class="a t" id="t133" style="top:803px;font-size:15.6px;line-height:21px;color:#c4c4c4;letter-spacing:0.128px;-webkit-text-stroke:0.25px #c4c4c4;left:104.5px;">Decorations</span>
<svg class="a" style="left:68px;top:828.75px;" width="8.5" height="10" viewBox="0 0 8.5 10"><path d="M0 0V10L8.5 5.0Z" fill="#7e7e7e"/></svg>
<svg class="a" style="left:83px;top:827.25px;" width="16" height="13.5" viewBox="0 0 16 14"><path d="M0.8 1.6Q0.8 0.8 1.6 0.8H5.8L7.4 3H14.4Q15.2 3 15.2 3.8V12.4Q15.2 13.2 14.4 13.2H1.6Q0.8 13.2 0.8 12.4Z" fill="#c4c4c4"/></svg>
<span class="a t" id="t134" style="top:823px;font-size:15.6px;line-height:21px;color:#c4c4c4;letter-spacing:0.185px;-webkit-text-stroke:0.25px #c4c4c4;left:104.5px;">Effects</span>
<svg class="a" style="left:83px;top:847.25px;" width="16" height="13.5" viewBox="0 0 16 14"><path d="M0.8 1.6Q0.8 0.8 1.6 0.8H5.8L7.4 3H14.4Q15.2 3 15.2 3.8V12.4Q15.2 13.2 14.4 13.2H1.6Q0.8 13.2 0.8 12.4Z" fill="#c4c4c4"/></svg>
<span class="a t" id="t135" style="top:843px;font-size:15.6px;line-height:21px;color:#c4c4c4;letter-spacing:-0.117px;-webkit-text-stroke:0.25px #c4c4c4;left:104.5px;">Farming</span>
<svg class="a" style="left:68px;top:868.75px;" width="8.5" height="10" viewBox="0 0 8.5 10"><path d="M0 0V10L8.5 5.0Z" fill="#7e7e7e"/></svg>
<svg class="a" style="left:83px;top:867.25px;" width="16" height="13.5" viewBox="0 0 16 14"><path d="M0.8 1.6Q0.8 0.8 1.6 0.8H5.8L7.4 3H14.4Q15.2 3 15.2 3.8V12.4Q15.2 13.2 14.4 13.2H1.6Q0.8 13.2 0.8 12.4Z" fill="#c4c4c4"/></svg>
<span class="a t" id="t136" style="top:863px;font-size:15.6px;line-height:21px;color:#c4c4c4;letter-spacing:-0.490px;-webkit-text-stroke:0.25px #c4c4c4;left:104.5px;">Fish</span>
<svg class="a" style="left:83px;top:887.25px;" width="16" height="13.5" viewBox="0 0 16 14"><path d="M0.8 1.6Q0.8 0.8 1.6 0.8H5.8L7.4 3H14.4Q15.2 3 15.2 3.8V12.4Q15.2 13.2 14.4 13.2H1.6Q0.8 13.2 0.8 12.4Z" fill="#c4c4c4"/></svg>
<span class="a t" id="t137" style="top:883px;font-size:15.6px;line-height:21px;color:#c4c4c4;letter-spacing:-0.052px;-webkit-text-stroke:0.25px #c4c4c4;left:104.5px;">FruitTrees</span>
<svg class="a" style="left:83px;top:907.25px;" width="16" height="13.5" viewBox="0 0 16 14"><path d="M0.8 1.6Q0.8 0.8 1.6 0.8H5.8L7.4 3H14.4Q15.2 3 15.2 3.8V12.4Q15.2 13.2 14.4 13.2H1.6Q0.8 13.2 0.8 12.4Z" fill="#c4c4c4"/></svg>
<span class="a t" id="t138" style="top:903px;font-size:15.6px;line-height:21px;color:#c4c4c4;letter-spacing:-0.070px;-webkit-text-stroke:0.25px #c4c4c4;left:104.5px;">Islands</span>
<svg class="a" style="left:83px;top:927.25px;" width="16" height="13.5" viewBox="0 0 16 14"><path d="M0.8 1.6Q0.8 0.8 1.6 0.8H5.8L7.4 3H14.4Q15.2 3 15.2 3.8V12.4Q15.2 13.2 14.4 13.2H1.6Q0.8 13.2 0.8 12.4Z" fill="#c4c4c4"/></svg>
<span class="a t" id="t139" style="top:923px;font-size:15.6px;line-height:21px;color:#c4c4c4;letter-spacing:-0.031px;-webkit-text-stroke:0.25px #c4c4c4;left:104.5px;">Items</span>
<svg class="a" style="left:68px;top:948.75px;" width="8.5" height="10" viewBox="0 0 8.5 10"><path d="M0 0V10L8.5 5.0Z" fill="#7e7e7e"/></svg>
<svg class="a" style="left:83px;top:947.25px;" width="16" height="13.5" viewBox="0 0 16 14"><path d="M0.8 1.6Q0.8 0.8 1.6 0.8H5.8L7.4 3H14.4Q15.2 3 15.2 3.8V12.4Q15.2 13.2 14.4 13.2H1.6Q0.8 13.2 0.8 12.4Z" fill="#c4c4c4"/></svg>
<span class="a t" id="t140" style="top:943px;font-size:15.6px;line-height:21px;color:#c4c4c4;letter-spacing:0.148px;-webkit-text-stroke:0.25px #c4c4c4;left:104.5px;">Tools</span>
<svg class="a" style="left:83px;top:967.25px;" width="16" height="13.5" viewBox="0 0 16 14"><path d="M0.8 1.6Q0.8 0.8 1.6 0.8H5.8L7.4 3H14.4Q15.2 3 15.2 3.8V12.4Q15.2 13.2 14.4 13.2H1.6Q0.8 13.2 0.8 12.4Z" fill="#c4c4c4"/></svg>
<span class="a t" id="t141" style="top:963px;font-size:15.6px;line-height:21px;color:#c4c4c4;letter-spacing:-1.594px;-webkit-text-stroke:0.25px #c4c4c4;left:104.5px;">UI</span>
<div class="a" style="left:251px;top:685px;width:17px;height:299px;background:#353535;"></div>
<svg class="a" style="left:256px;top:692.5px;" width="9" height="5" viewBox="0 0 9 5"><path d="M0 5H9L4.5 0Z" fill="#c4c4c4"/></svg>
<svg class="a" style="left:256px;top:971px;" width="9" height="5" viewBox="0 0 9 5"><path d="M0 0H9L4.5 5Z" fill="#c4c4c4"/></svg>
<div class="a" style="left:254px;top:774px;width:12.5px;height:49px;background:#5f5f5f;border-radius:6px;"></div>
<div class="a" style="left:268px;top:685px;width:1px;height:299px;background:#232323;"></div>
<div class="a" style="left:269px;top:685px;width:1190px;height:26px;background:#404040;"></div>
<div class="a" style="left:269px;top:711px;width:1190px;height:247px;background:#333333;"></div>
<div class="a" style="left:269px;top:958px;width:1190px;height:26px;background:#404040;"></div>
<span class="a t" id="t142" style="top:687px;font-size:15.6px;line-height:21px;color:#c4c4c4;letter-spacing:-0.059px;-webkit-text-stroke:0.25px #c4c4c4;left:274.5px;">Assets</span>
<svg class="a" style="left:331px;top:692px;" width="7" height="11" viewBox="0 0 7 11"><path d="M1 1L5.6 5.5L1 10" fill="none" stroke="#b0b0b0" stroke-width="1.4"/></svg>
<span class="a t" id="t143" style="top:687px;font-size:15.6px;line-height:21px;color:#c4c4c4;letter-spacing:-0.026px;-webkit-text-stroke:0.25px #c4c4c4;left:344.5px;">FarmingIsland</span>
<svg class="a" style="left:452.5px;top:692px;" width="7" height="11" viewBox="0 0 7 11"><path d="M1 1L5.6 5.5L1 10" fill="none" stroke="#b0b0b0" stroke-width="1.4"/></svg>
<span class="a t" id="t144" style="top:687px;font-size:15.6px;line-height:21px;color:#c4c4c4;letter-spacing:0.042px;-webkit-text-stroke:0.25px #c4c4c4;left:466px;">Prefabs</span>
<svg class="a" style="left:530px;top:692px;" width="7" height="11" viewBox="0 0 7 11"><path d="M1 1L5.6 5.5L1 10" fill="none" stroke="#b0b0b0" stroke-width="1.4"/></svg>
<span class="a t" id="t145" style="top:687px;font-size:15.6px;line-height:21px;color:#d2d2d2;font-weight:700;letter-spacing:-0.594px;left:543px;">UI</span>
<svg class="a" style="left:567.5px;top:692px;" width="7" height="11" viewBox="0 0 7 11"><path d="M1 1L5.6 5.5L1 10" fill="none" stroke="#b0b0b0" stroke-width="1.4"/></svg>
<svg class="a" style="left:292.3px;top:729px;" width="66" height="70" viewBox="0 0 66 70"><path d="M32 0.5Q33 0 34 0.5L61.6 12.6Q63.2 13.4 61.6 14.2L34.4 29.3Q33 30 31.6 29.3L4.4 14.2Q2.8 13.4 4.4 12.6Z" fill="#7fd6fd"/><path d="M0.4 20.6Q0.4 18.4 2.2 19.4L28.8 34Q30.2 34.8 30.2 36.4V68.8Q30.2 70.4 28.8 69.6L2.6 55.8Q0.4 54.6 0.4 52.2Z" fill="#7fd6fd"/><path d="M65.6 20.6Q65.6 18.4 63.8 19.4L37.2 34Q35.8 34.8 35.8 36.4V68.8Q35.8 70.4 37.2 69.6L63.4 55.8Q65.6 54.6 65.6 52.2Z" fill="#7fd6fd"/></svg>
<span class="a t" id="t146" style="top:804px;font-size:13.3px;line-height:19px;color:#c4c4c4;letter-spacing:-0.321px;-webkit-text-stroke:0.2px #c4c4c4;left:303.425px;">CropInfo</span>
<svg class="a" style="left:387.3px;top:729px;" width="66" height="70" viewBox="0 0 66 70"><path d="M32 0.5Q33 0 34 0.5L61.6 12.6Q63.2 13.4 61.6 14.2L34.4 29.3Q33 30 31.6 29.3L4.4 14.2Q2.8 13.4 4.4 12.6Z" fill="#7fd6fd"/><path d="M0.4 20.6Q0.4 18.4 2.2 19.4L28.8 34Q30.2 34.8 30.2 36.4V68.8Q30.2 70.4 28.8 69.6L2.6 55.8Q0.4 54.6 0.4 52.2Z" fill="#7fd6fd"/><path d="M65.6 20.6Q65.6 18.4 63.8 19.4L37.2 34Q35.8 34.8 35.8 36.4V68.8Q35.8 70.4 37.2 69.6L63.4 55.8Q65.6 54.6 65.6 52.2Z" fill="#7fd6fd"/></svg>
<span class="a t" id="t147" style="top:804px;font-size:13.3px;line-height:19px;color:#c4c4c4;letter-spacing:-0.335px;-webkit-text-stroke:0.2px #c4c4c4;left:383.8px;">FarmerUpgr...</span>
<svg class="a" style="left:482.3px;top:729px;" width="66" height="70" viewBox="0 0 66 70"><path d="M32 0.5Q33 0 34 0.5L61.6 12.6Q63.2 13.4 61.6 14.2L34.4 29.3Q33 30 31.6 29.3L4.4 14.2Q2.8 13.4 4.4 12.6Z" fill="#7fd6fd"/><path d="M0.4 20.6Q0.4 18.4 2.2 19.4L28.8 34Q30.2 34.8 30.2 36.4V68.8Q30.2 70.4 28.8 69.6L2.6 55.8Q0.4 54.6 0.4 52.2Z" fill="#7fd6fd"/><path d="M65.6 20.6Q65.6 18.4 63.8 19.4L37.2 34Q35.8 34.8 35.8 36.4V68.8Q35.8 70.4 37.2 69.6L63.4 55.8Q65.6 54.6 65.6 52.2Z" fill="#7fd6fd"/></svg>
<span class="a t" id="t148" style="top:804px;font-size:13.3px;line-height:19px;color:#c4c4c4;letter-spacing:-0.539px;-webkit-text-stroke:0.2px #c4c4c4;left:482.79999999999995px;">FullMessage</span>
<svg class="a" style="left:577.3px;top:729px;" width="66" height="70" viewBox="0 0 66 70"><path d="M32 0.5Q33 0 34 0.5L61.6 12.6Q63.2 13.4 61.6 14.2L34.4 29.3Q33 30 31.6 29.3L4.4 14.2Q2.8 13.4 4.4 12.6Z" fill="#7fd6fd"/><path d="M0.4 20.6Q0.4 18.4 2.2 19.4L28.8 34Q30.2 34.8 30.2 36.4V68.8Q30.2 70.4 28.8 69.6L2.6 55.8Q0.4 54.6 0.4 52.2Z" fill="#7fd6fd"/><path d="M65.6 20.6Q65.6 18.4 63.8 19.4L37.2 34Q35.8 34.8 35.8 36.4V68.8Q35.8 70.4 37.2 69.6L63.4 55.8Q65.6 54.6 65.6 52.2Z" fill="#7fd6fd"/></svg>
<span class="a t" id="t149" style="top:804px;font-size:13.3px;line-height:19px;color:#c4c4c4;letter-spacing:-0.328px;-webkit-text-stroke:0.2px #c4c4c4;left:589.925px;">ItemInfo</span>
<svg class="a" style="left:672.3px;top:729px;" width="66" height="70" viewBox="0 0 66 70"><path d="M32 0.5Q33 0 34 0.5L61.6 12.6Q63.2 13.4 61.6 14.2L34.4 29.3Q33 30 31.6 29.3L4.4 14.2Q2.8 13.4 4.4 12.6Z" fill="#7fd6fd"/><path d="M0.4 20.6Q0.4 18.4 2.2 19.4L28.8 34Q30.2 34.8 30.2 36.4V68.8Q30.2 70.4 28.8 69.6L2.6 55.8Q0.4 54.6 0.4 52.2Z" fill="#7fd6fd"/><path d="M65.6 20.6Q65.6 18.4 63.8 19.4L37.2 34Q35.8 34.8 35.8 36.4V68.8Q35.8 70.4 37.2 69.6L63.4 55.8Q65.6 54.6 65.6 52.2Z" fill="#7fd6fd"/></svg>
<span class="a t" id="t150" style="top:804px;font-size:13.3px;line-height:19px;color:#c4c4c4;letter-spacing:-0.279px;-webkit-text-stroke:0.2px #c4c4c4;left:670.3px;">ItemPriceInfo</span>
<svg class="a" style="left:767.3px;top:729px;" width="66" height="70" viewBox="0 0 66 70"><path d="M32 0.5Q33 0 34 0.5L61.6 12.6Q63.2 13.4 61.6 14.2L34.4 29.3Q33 30 31.6 29.3L4.4 14.2Q2.8 13.4 4.4 12.6Z" fill="#7fd6fd"/><path d="M0.4 20.6Q0.4 18.4 2.2 19.4L28.8 34Q30.2 34.8 30.2 36.4V68.8Q30.2 70.4 28.8 69.6L2.6 55.8Q0.4 54.6 0.4 52.2Z" fill="#7fd6fd"/><path d="M65.6 20.6Q65.6 18.4 63.8 19.4L37.2 34Q35.8 34.8 35.8 36.4V68.8Q35.8 70.4 37.2 69.6L63.4 55.8Q65.6 54.6 65.6 52.2Z" fill="#7fd6fd"/></svg>
<span class="a t" id="t151" style="top:804px;font-size:13.3px;line-height:19px;color:#c4c4c4;letter-spacing:-0.237px;-webkit-text-stroke:0.2px #c4c4c4;left:765.3px;">MerchantInfo</span>
<svg class="a" style="left:862.3px;top:729px;" width="66" height="70" viewBox="0 0 66 70"><path d="M32 0.5Q33 0 34 0.5L61.6 12.6Q63.2 13.4 61.6 14.2L34.4 29.3Q33 30 31.6 29.3L4.4 14.2Q2.8 13.4 4.4 12.6Z" fill="#7fd6fd"/><path d="M0.4 20.6Q0.4 18.4 2.2 19.4L28.8 34Q30.2 34.8 30.2 36.4V68.8Q30.2 70.4 28.8 69.6L2.6 55.8Q0.4 54.6 0.4 52.2Z" fill="#7fd6fd"/><path d="M65.6 20.6Q65.6 18.4 63.8 19.4L37.2 34Q35.8 34.8 35.8 36.4V68.8Q35.8 70.4 37.2 69.6L63.4 55.8Q65.6 54.6 65.6 52.2Z" fill="#7fd6fd"/></svg>
<span class="a t" id="t152" style="top:804px;font-size:13.3px;line-height:19px;color:#c4c4c4;letter-spacing:-0.252px;-webkit-text-stroke:0.2px #c4c4c4;left:865.05px;">ProductInfo</span>
<svg class="a" style="left:957.3px;top:729px;" width="66" height="70" viewBox="0 0 66 70"><path d="M32 0.5Q33 0 34 0.5L61.6 12.6Q63.2 13.4 61.6 14.2L34.4 29.3Q33 30 31.6 29.3L4.4 14.2Q2.8 13.4 4.4 12.6Z" fill="#7fd6fd"/><path d="M0.4 20.6Q0.4 18.4 2.2 19.4L28.8 34Q30.2 34.8 30.2 36.4V68.8Q30.2 70.4 28.8 69.6L2.6 55.8Q0.4 54.6 0.4 52.2Z" fill="#7fd6fd"/><path d="M65.6 20.6Q65.6 18.4 63.8 19.4L37.2 34Q35.8 34.8 35.8 36.4V68.8Q35.8 70.4 37.2 69.6L63.4 55.8Q65.6 54.6 65.6 52.2Z" fill="#7fd6fd"/></svg>
<span class="a t" id="t153" style="top:804px;font-size:13.3px;line-height:19px;color:#c4c4c4;letter-spacing:-0.329px;-webkit-text-stroke:0.2px #c4c4c4;left:953.925px;">SettingsWin...</span>
<svg class="a" style="left:1052.3px;top:729px;" width="66" height="70" viewBox="0 0 66 70"><path d="M32 0.5Q33 0 34 0.5L61.6 12.6Q63.2 13.4 61.6 14.2L34.4 29.3Q33 30 31.6 29.3L4.4 14.2Q2.8 13.4 4.4 12.6Z" fill="#7fd6fd"/><path d="M0.4 20.6Q0.4 18.4 2.2 19.4L28.8 34Q30.2 34.8 30.2 36.4V68.8Q30.2 70.4 28.8 69.6L2.6 55.8Q0.4 54.6 0.4 52.2Z" fill="#7fd6fd"/><path d="M65.6 20.6Q65.6 18.4 63.8 19.4L37.2 34Q35.8 34.8 35.8 36.4V68.8Q35.8 70.4 37.2 69.6L63.4 55.8Q65.6 54.6 65.6 52.2Z" fill="#7fd6fd"/></svg>
<span class="a t" id="t154" style="top:804px;font-size:13.3px;line-height:19px;color:#c4c4c4;letter-spacing:-0.504px;-webkit-text-stroke:0.2px #c4c4c4;left:1056.925px;">UIManager</span>
<div class="a" style="left:1370px;top:969px;width:69px;height:3px;background:#5e5e5e;border-radius:1.5px;"></div>
<div class="a" style="left:1403.5px;top:964px;width:13px;height:13px;background:#9a9a9a;border-radius:6.5px;"></div>
<div class="a" style="left:9px;top:984px;width:1900px;height:27px;background:#141414;border-radius:0 0 9px 9px;"></div>
<svg class="a" style="left:12px;top:988px;" width="17" height="16.4" viewBox="0 0 19 18"><path d="M9.5 1.2L18 16.4H1Z" fill="#ffc107" stroke="#ffc107" stroke-width="1.2" stroke-linejoin="round"/><path d="M9.5 6V11.4" stroke="#141414" stroke-width="1.8" stroke-linecap="round"/><circle cx="9.5" cy="14" r="1.1" fill="#141414"/></svg>
<span class="a t" id="t155" style="top:988px;font-size:15.6px;line-height:21px;color:#d8a608;letter-spacing:0.183px;-webkit-text-stroke:0.25px #d8a608;left:34px;">The project currently uses the compatibility mode where the Render Graph API is disabled. Support for this mode will be removed in future Unity versions. Migrate existing ScriptableRenderPasses to the new RenderGraph API. After the migratior</span>
<div class="a" style="left:1810px;top:986px;width:1px;height:24px;background:#2a2a2a;"></div>
<div class="a" style="left:1843px;top:986px;width:1px;height:24px;background:#2a2a2a;"></div>
<div class="a" style="left:1876px;top:986px;width:1px;height:24px;background:#2a2a2a;"></div>
<svg class="a" style="left:1816px;top:988px;" width="20" height="20" viewBox="0 0 20 20"><g fill="#c4c4c4"><ellipse cx="10" cy="12" rx="5.4" ry="6.6"/><circle cx="10" cy="5.6" r="3"/></g><g stroke="#c4c4c4" stroke-width="1.5" fill="none"><path d="M5.2 9L2 7V5M5 12.4H1.6M5.4 15.4L2.6 17.4V19M14.8 9L18 7V5M15 12.4H18.4M14.6 15.4L17.4 17.4V19M7.8 3.6L6 1.4M12.2 3.6L14 1.4"/></g><path d="M2 1.6L18.6 18.6" stroke="#141414" stroke-width="3.2"/><path d="M2 1.6L18.6 18.6" stroke="#d0d0d0" stroke-width="1.3"/></svg>
<svg class="a" style="left:1849px;top:988px;" width="20" height="20" viewBox="0 0 20 20"><g fill="#c4c4c4"><path d="M2.4 5.4A7.4 3.2 0 0 1 17.2 5.4V7.2A7.4 3.2 0 0 1 2.4 7.2Z"/><path d="M2.4 9.6A7.4 3.2 0 0 0 17.2 9.6V11.8A7.4 3.2 0 0 1 2.4 11.8Z"/><path d="M2.4 14.2A7.4 3.2 0 0 0 17.2 14.2V15.6A7.4 3.2 0 0 1 2.4 15.6Z"/></g><path d="M2 1.6L18.6 18.6" stroke="#141414" stroke-width="3"/><path d="M2 1.6L18.6 18.6" stroke="#c4c4c4" stroke-width="1.2"/></svg>
<svg class="a" style="left:1881px;top:988px;" width="20" height="20" viewBox="0 0 20 20"><circle cx="10" cy="10" r="8.4" fill="none" stroke="#c4c4c4" stroke-width="1.2"/><path d="M6.2 10.2L9 12.8L14 7.4" fill="none" stroke="#c4c4c4" stroke-width="1.6"/></svg>
<div class="a" style="left:0px;top:1020px;width:1920px;height:60px;background:linear-gradient(90deg,#2c1a31 0%,#3a1a2c 18%,#431a27 45%,#40192a 72%,#351a2e 85%,#2f1a30 100%);"></div>
<div class="a" style="left:0px;top:1020px;width:1920px;height:1px;background:rgba(255,255,255,0.10);"></div>
<svg class="a" style="left:24px;top:1032px;" width="36" height="40" viewBox="0 0 36 40"><defs><linearGradient id="mn" x1="0" y1="0" x2="0" y2="1"><stop offset="0" stop-color="#f5c02c"/><stop offset="1" stop-color="#f07f1a"/></linearGradient></defs><path d="M2 21.4Q5 30.6 16 31.2Q29.6 30 30.4 13L20 12Q22 19.6 13.6 21.8Q7 23 2 21.4Z" fill="url(#mn)"/><circle cx="24.8" cy="5.6" r="9.8" fill="#c42b1c"/></svg>
<span class="a t" id="t156" style="top:1028px;font-size:14px;line-height:20px;color:#ffffff;left:48.80px;transform:translateX(-50%);">4</span>
<span class="a t" id="t157" style="top:1029px;font-size:15.6px;line-height:21px;color:#ffffff;letter-spacing:-1.703px;-webkit-text-stroke:0.25px #ffffff;left:65px;">55°F</span>
<span class="a t" id="t158" style="top:1049px;font-size:15.6px;line-height:21px;color:#d8d0d8;letter-spacing:-0.941px;-webkit-text-stroke:0.25px #d8d0d8;left:65px;">Clear</span>
<svg class="a" style="left:475px;top:1036px;" width="30" height="30" viewBox="0 0 30 30"><defs><linearGradient id="wn" x1="0" y1="0" x2="1" y2="1"><stop offset="0" stop-color="#63d3ff"/><stop offset="1" stop-color="#1a9bf0"/></linearGradient></defs><g fill="url(#wn)"><rect x="0" y="0" width="14" height="14" rx="1"/><rect x="15.4" y="0" width="14" height="14" rx="1"/><rect x="0" y="15.4" width="14" height="14" rx="1"/><rect x="15.4" y="15.4" width="14" height="14" rx="1"/></g></svg>
<div class="a" style="left:522px;top:1031px;width:273px;height:38px;background:#f3f0f4;border-radius:19px;"></div>
<svg class="a" style="left:535px;top:1040px;" width="22" height="22" viewBox="0 0 22 22"><circle cx="9" cy="9" r="6.6" fill="none" stroke="#1c1c1c" stroke-width="1.8"/><path d="M13.8 13.8L19 19" stroke="#1c1c1c" stroke-width="2" stroke-linecap="round"/></svg>
<span class="a t" id="t159" style="top:1039px;font-size:16.5px;line-height:22px;color:#555;letter-spacing:0.198px;left:567px;">Search web &amp; PC</span>
<svg class="a" style="left:730px;top:1034px;" width="62" height="34" viewBox="0 0 62 34"><ellipse cx="31" cy="30" rx="28" ry="4" fill="#58b947"/><rect x="4" y="20" width="8" height="10" fill="#4a7a8c"/><rect x="10" y="15" width="5" height="15" fill="#2f6a80"/><rect x="17.4" y="4" width="1.6" height="26" fill="#d33a7a"/><circle cx="18.2" cy="11" r="2.6" fill="#e2407f"/><circle cx="18.2" cy="22" r="3.4" fill="#e2407f"/><rect x="27" y="8" width="6" height="22" fill="#2a8fe0"/><rect x="24" y="24" width="10" height="6" fill="#e8c45a"/><rect x="38" y="3" width="5" height="27" fill="#2f7f8f"/><circle cx="36" cy="26" r="3" fill="#3aa0e0"/><rect x="45" y="22" width="5" height="8" fill="#557"/><rect x="50" y="18" width="8" height="12" rx="2" fill="#d9a441"/></svg>
<div class="a" style="left:811px;top:1045px;width:23px;height:20px;background:#6a6a6a;border-radius:2px;"></div>
<div class="a" style="left:818px;top:1036px;width:23px;height:20px;background:linear-gradient(135deg,#ffffff,#d8d8d8);border-radius:2px;"></div>
<svg class="a" style="left:865px;top:1035px;" width="32" height="32" viewBox="0 0 32 32"><circle cx="25" cy="9" r="3.4" fill="#5059c9"/><rect x="19" y="13" width="12" height="12" rx="3" fill="#5059c9"/><circle cx="16.6" cy="6.6" r="4.6" fill="#7b83eb"/><path d="M9 13H24V23A7.5 7.5 0 0 1 9 23Z" fill="#7b83eb"/><rect x="1" y="9" width="14" height="14" rx="1.6" fill="#4b53bc"/><path d="M4.6 12.6H11.4M8 12.6V19.8" stroke="#fff" stroke-width="1.8"/></svg>
<svg class="a" style="left:921px;top:1036px;" width="30" height="28" viewBox="0 0 30 28"><defs><linearGradient id="cp1" x1="0.2" y1="0" x2="0.4" y2="1"><stop offset="0" stop-color="#1f7ff0"/><stop offset="0.35" stop-color="#35c3e8"/><stop offset="0.65" stop-color="#7ed957"/><stop offset="1" stop-color="#f7d23a"/></linearGradient><linearGradient id="cp2" x1="0.5" y1="0" x2="0.4" y2="1"><stop offset="0" stop-color="#a66cf5"/><stop offset="0.45" stop-color="#f067a6"/><stop offset="0.8" stop-color="#f9913a"/><stop offset="1" stop-color="#e8452c"/></linearGradient></defs><path d="M10.4 1.4H18.4Q21.4 1.4 20.2 4.6L15.4 18.4Q14.4 21.4 11 21.4H4Q0.4 21.4 1.4 17.6L5.4 5Q6.6 1.4 10.4 1.4Z" fill="url(#cp1)"/><path d="M19.6 26.6H11.6Q8.6 26.6 9.8 23.4L14.6 9.6Q15.6 6.6 19 6.6H26Q29.6 6.6 28.6 10.4L24.6 23Q23.4 26.6 19.6 26.6Z" fill="url(#cp2)"/><path d="M15.4 8.6L12.6 17.4" stroke="#3a1626" stroke-width="2.6" stroke-linecap="round"/></svg>
<svg class="a" style="left:975px;top:1036.5px;" width="32" height="28" viewBox="0 0 32 28"><defs><linearGradient id="fd" x1="0" y1="0" x2="1" y2="1"><stop offset="0" stop-color="#ffe083"/><stop offset="1" stop-color="#f8c332"/></linearGradient></defs><path d="M1 3Q1 1 3 1H10.4Q11.4 1 12.2 1.8L14.4 4H29Q31 4 31 6V24Q31 26 29 26H3Q1 26 1 24Z" fill="#e3a90c"/><path d="M1 8Q1 6.6 2.4 6.6H10.8L13.6 4H29Q31 4 31 6V24.4Q31 26.4 29 26.4H3Q1 26.4 1 24.4Z" fill="url(#fd)"/><path d="M6.6 21.4Q6.6 19.6 8.4 19.6H23.6Q25.4 19.6 25.4 21.4V26.4H6.6Z" fill="#1b86dc"/><path d="M10 22.6H22" stroke="#0f5fae" stroke-width="1.2"/></svg>
<svg class="a" style="left:1030px;top:1035px;" width="32" height="32" viewBox="0 0 32 32"><defs><linearGradient id="ed" x1="0" y1="0" x2="1" y2="1"><stop offset="0" stop-color="#35c1f1"/><stop offset="0.6" stop-color="#1b7fd6"/><stop offset="1" stop-color="#0c59a4"/></linearGradient><linearGradient id="ed2" x1="0" y1="0" x2="1" y2="0"><stop offset="0" stop-color="#2ec0e8"/><stop offset="1" stop-color="#6fdc5a"/></linearGradient></defs><circle cx="16" cy="16" r="15" fill="url(#ed)"/><path d="M2 13A15 15 0 0 1 31 15Q31 21 24 21Q19 21 20 17Q17 10 10 12Q4 14 2 13Z" fill="url(#ed2)"/><path d="M12 17A6 6 0 0 0 24 26Q16 30 12 24Q10 20 12 17Z" fill="#0f4f9a"/></svg>
<svg class="a" style="left:1086.5px;top:1035.5px;" width="28.5" height="28.5" viewBox="0 0 30 30"><circle cx="15" cy="15" r="14" fill="#c8781c"/><circle cx="15" cy="15" r="11.4" fill="#f29a1f"/><path d="M11 8V22M11 8H16Q19.6 8 19.6 11.4Q19.6 14.6 16 14.8H11M16 14.8Q20.4 15 20.4 18.4Q20.4 22 16 22H11M14 6V24" fill="none" stroke="#1f8a3a" stroke-width="1.7"/></svg>
<svg class="a" style="left:1140px;top:1034px;" width="31" height="31" viewBox="0 0 24 24"><path d="M12 0.8L21.7 6.4V17.6L12 23.2L2.3 17.6V6.4Z" fill="#ccd1d6"/><path d="M12 3.9L19 7.95V16.05L12 20.1L5 16.05V7.95Z" fill="#47515b"/><g fill="#cfd4d9"><path d="M12 5.9L15.4 7.9L12 9.9L8.6 7.9Z"/><path d="M11.3 3.6H12.7V6.6H11.3Z"/><path d="M6.5 10.3L10.5 12.6V17L6.5 14.7Z"/><path d="M17.5 10.3L13.5 12.6V17L17.5 14.7Z"/><path d="M4.2 14.9L6.9 13.4L7.6 14.6L4.9 16.1ZM19.8 14.9L17.1 13.4L16.4 14.6L19.1 16.1Z"/></g></svg>
<div class="a" style="left:1186px;top:1025px;width:50px;height:50px;background:rgba(255,255,255,0.065);border-radius:5px;box-shadow:inset 0 0 0 1px rgba(255,255,255,0.05);"></div>
<svg class="a" style="left:1196px;top:1034.5px;" width="30" height="30" viewBox="0 0 24 24"><path d="M12 0.8L21.7 6.4V17.6L12 23.2L2.3 17.6V6.4Z" fill="#4b5761"/><path d="M12 3.9L19 7.95V16.05L12 20.1L5 16.05V7.95Z" fill="#d3d8de"/><g fill="#5a6670"><path d="M12 5.9L15.4 7.9L12 9.9L8.6 7.9Z"/><path d="M11.3 3.6H12.7V6.6H11.3Z"/><path d="M6.5 10.3L10.5 12.6V17L6.5 14.7Z"/><path d="M17.5 10.3L13.5 12.6V17L17.5 14.7Z"/><path d="M4.2 14.9L6.9 13.4L7.6 14.6L4.9 16.1ZM19.8 14.9L17.1 13.4L16.4 14.6L19.1 16.1Z"/></g></svg>
<span class="a t" id="t160" style="top:1044px;font-size:17px;line-height:23px;color:#ececec;font-weight:700;left:1215.5px;font-style:italic;text-shadow:0 0 2px #555,-1px 1px 0 #999;">6</span>
<svg class="a" style="left:1252px;top:1035.2px;" width="27.6" height="27.6" viewBox="0 0 28 28"><rect x="0.5" y="0.5" width="27" height="27" rx="4" fill="#b30b00"/><path d="M6 21Q9 20 11.4 14.6Q13.6 9.4 13 6.4Q12.6 5 13.8 5Q15 5.2 14.8 7.6Q14.4 11.6 17.6 15.6Q19.6 17.8 22 17.8Q23.4 17.6 22.6 16.6Q21 15.4 16 16.2Q11.4 17 8.4 19Q6 21 6 21Z" fill="none" stroke="#fff" stroke-width="1.5" stroke-linejoin="round"/></svg>
<svg class="a" style="left:1305px;top:1034px;" width="32" height="32" viewBox="0 0 32 32"><path d="M23 2L30 5V27L23 30L9 18L4 22L1 20.4V11.6L4 10L9 14Z" fill="#8a5bd6"/><path d="M23 2L30 5V27L23 30Z" fill="#b98cf5"/><path d="M23 10.6V21.4L16 16Z" fill="#3a1a4a"/><path d="M4 13.4V18.6L6.8 16Z" fill="#3a1a4a"/></svg>
<svg class="a" style="left:1362px;top:1036px;" width="28.4" height="28.4" viewBox="0 0 32 32"><defs><linearGradient id="st" x1="0" y1="0" x2="0" y2="1"><stop offset="0" stop-color="#111d2e"/><stop offset="1" stop-color="#1387b8"/></linearGradient></defs><circle cx="16" cy="16" r="15" fill="url(#st)"/><circle cx="21" cy="12" r="4.6" fill="none" stroke="#fff" stroke-width="2"/><circle cx="21" cy="12" r="2" fill="#fff"/><path d="M1.6 17.6L9.6 21A3.6 3.6 0 1 0 11 18L17 13.6" fill="none" stroke="#fff" stroke-width="2.4" stroke-linejoin="round"/></svg>
<svg class="a" style="left:1417.2px;top:1036px;" width="28" height="28" viewBox="0 0 32 32"><defs><linearGradient id="it" x1="0.3" y1="0" x2="0.6" y2="1"><stop offset="0" stop-color="#fb4f6e"/><stop offset="0.5" stop-color="#c463e8"/><stop offset="1" stop-color="#3cb4f7"/></linearGradient></defs><circle cx="16" cy="16" r="15" fill="#f6f2f6" stroke="url(#it)" stroke-width="1.6"/><path d="M12.6 9.6L22 7.6V19.4A2.8 2.4 0 1 1 20 17.2V11.4L14.6 12.6V21.4A2.8 2.4 0 1 1 12.6 19.2Z" fill="url(#it)"/></svg>
<div class="a" style="left:1042px;top:1070px;width:8px;height:3px;background:#9a8e9a;border-radius:1.5px;"></div>
<div class="a" style="left:1097px;top:1070px;width:8px;height:3px;background:#9a8e9a;border-radius:1.5px;"></div>
<div class="a" style="left:1152px;top:1070px;width:8px;height:3px;background:#9a8e9a;border-radius:1.5px;"></div>
<div class="a" style="left:1262px;top:1070px;width:8px;height:3px;background:#9a8e9a;border-radius:1.5px;"></div>
<div class="a" style="left:1317px;top:1070px;width:8px;height:3px;background:#9a8e9a;border-radius:1.5px;"></div>
<div class="a" style="left:1372px;top:1070px;width:8px;height:3px;background:#9a8e9a;border-radius:1.5px;"></div>
<div class="a" style="left:1427px;top:1070px;width:8px;height:3px;background:#9a8e9a;border-radius:1.5px;"></div>
<div class="a" style="left:1201px;top:1070px;width:20px;height:3px;background:#4cc2ff;border-radius:1.5px;"></div>
<svg class="a" style="left:1599px;top:1043px;" width="16" height="12" viewBox="0 0 16 12"><path d="M1.6 9.6L8 3.2L14.4 9.6" fill="none" stroke="#fff" stroke-width="1.6"/></svg>
<svg class="a" style="left:1635px;top:1040px;" width="24" height="18" viewBox="0 0 24 18"><path d="M6 15H18A3.8 3.8 0 0 0 18.6 7.6A5.6 5.6 0 0 0 8 6.4A4.4 4.4 0 0 0 6 15Z" fill="#9a8f9b"/><path d="M4 1L20 17" stroke="#e8e0e8" stroke-width="1.3"/></svg>
<span class="a t" id="t161" style="top:1040px;font-size:14.4px;line-height:20px;color:#ffffff;letter-spacing:-1.344px;left:1681px;">ENG</span>
<svg class="a" style="left:1731px;top:1040px;" width="22" height="18" viewBox="0 0 22 18"><g fill="none" stroke="#fff" stroke-width="1.5" stroke-linecap="round"><path d="M1.6 6.4A13.4 13.4 0 0 1 20.4 6.4"/><path d="M4.8 9.8A8.8 8.8 0 0 1 17.2 9.8"/><path d="M8 13A4.4 4.4 0 0 1 14 13"/></g><circle cx="11" cy="15.6" r="1.4" fill="#fff"/></svg>
<svg class="a" style="left:1760px;top:1040px;" width="24" height="18" viewBox="0 0 24 18"><path d="M1.6 6.6H4.6L9 2.6V15.4L4.6 11.4H1.6Z" fill="none" stroke="#fff" stroke-width="1.4" stroke-linejoin="round"/><path d="M11.6 6.4A3.6 3.6 0 0 1 11.6 11.6" fill="none" stroke="#fff" stroke-width="1.3"/><path d="M14.2 4A7 7 0 0 1 14.2 14" fill="none" stroke="#a898a8" stroke-width="1.3"/><path d="M17 1.8A10 10 0 0 1 17 16.2" fill="none" stroke="#7a6a7a" stroke-width="1.3"/></svg>
<svg class="a" style="left:1790px;top:1039px;" width="24" height="18" viewBox="0 0 24 18"><rect x="2.4" y="5.4" width="17" height="10.4" rx="2.4" fill="none" stroke="#fff" stroke-width="1.5"/><rect x="5" y="8" width="11.6" height="5.2" rx="1" fill="#fff"/><rect x="20.4" y="8.6" width="1.8" height="4" rx="0.8" fill="#fff"/><path d="M4.6 0.6L1 7.4H3.8L2.6 11.6L7 5.2H4.2Z" fill="#fff" stroke="#321a2e" stroke-width="0.8"/></svg>
<span class="a t" id="t162" style="top:1029px;font-size:15.6px;line-height:21px;color:#ffffff;letter-spacing:-0.342px;-webkit-text-stroke:0.25px #ffffff;right:24.34px;">10:34 AM</span>
<span class="a t" id="t163" style="top:1049px;font-size:15.6px;line-height:21px;color:#ffffff;letter-spacing:-0.029px;-webkit-text-stroke:0.25px #ffffff;right:24.03px;">9/3/2025</span>
</div>
</body></html>
